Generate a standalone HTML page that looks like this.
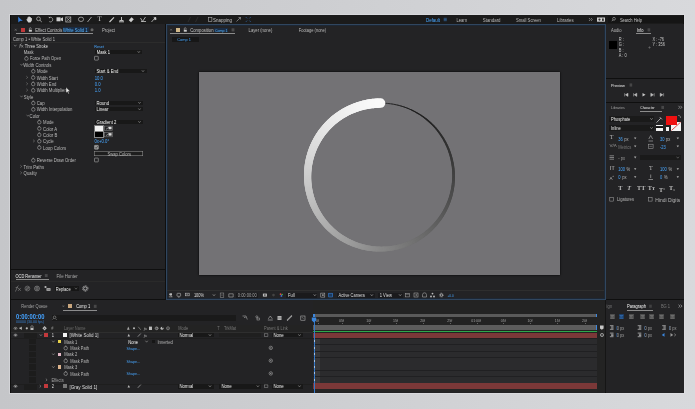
<!DOCTYPE html><html><head><meta charset="utf-8"><style>html,body{margin:0;padding:0;width:695px;height:409px;overflow:hidden;background:linear-gradient(90deg,#c5c6c9,#cdced1 45%,#d8d9dc);font-family:"Liberation Sans",sans-serif;}
.a{position:absolute;}
.t{position:absolute;transform-origin:0 0;font-size:4.1px;line-height:6px;color:#9a9a9a;white-space:nowrap;text-rendering:geometricPrecision;}
</style></head><body>
<div class="a" style="left:0;top:0;width:695px;height:409px;will-change:transform">
<div class="a" style="left:9px;top:14px;width:676px;height:380px;background:rgba(225,226,229,0.5);"></div>
<div class="a" style="left:10px;top:15px;width:674px;height:378px;background:#0f0f0f;"></div>
<div class="a" style="left:11px;top:15px;width:672px;height:9px;background:#1b1b1b;"></div>
<div class="a" style="left:11px;top:24px;width:154px;height:245px;background:#232325;"></div>
<div class="a" style="left:11px;top:270px;width:154px;height:29px;background:#232325;"></div>
<div class="a" style="left:166px;top:24px;width:438px;height:274px;background:#232325;border:1px solid #30465f;box-sizing:content-box;box-shadow:inset 0 0 0 0.7px #1d2a3a;"></div>
<div class="a" style="left:606px;top:24px;width:77.6px;height:54px;background:#232325;"></div>
<div class="a" style="left:606px;top:79px;width:77.6px;height:23px;background:#232325;"></div>
<div class="a" style="left:606px;top:103px;width:77.6px;height:196px;background:#232325;"></div>
<div class="a" style="left:11px;top:300px;width:594px;height:92.6px;background:#232325;"></div>
<div class="a" style="left:606px;top:300px;width:77.6px;height:92.6px;background:#232325;"></div>
<div class="t" style="left:97.5px;top:15.2px;font-size:7px;line-height:8px;color:#cfcfcf;font-family:'Liberation Serif'">T</div>
<div class="a" style="left:608px;top:16px;width:75px;height:7px;background:#151515;"></div>
<div class="a" style="left:20.8px;top:28px;width:4.2px;height:3.6px;background:#c0393b;"></div>
<div class="a" style="left:62.5px;top:27.4px;width:26px;height:5px;background:#1a2c44;"></div>
<div class="a" style="left:16px;top:32.5px;width:77px;height:0.8px;background:#8c8c8c;"></div>
<div class="a" style="left:11px;top:35.5px;width:154px;height:6px;background:#232325;"></div>
<div class="a" style="left:11px;top:41.5px;width:154px;height:0.6px;background:#2c2c2c;"></div>
<div class="a" style="left:94.8px;top:49.660000000000004px;width:47.5px;height:4.6px;background:#181818;"></div>
<div class="a" style="left:94.5px;top:68.74000000000001px;width:52px;height:4.6px;background:#181818;"></div>
<div class="a" style="left:94.5px;top:100.54px;width:48.5px;height:4.6px;background:#181818;"></div>
<div class="a" style="left:94.5px;top:106.9px;width:48.5px;height:4.6px;background:#181818;"></div>
<div class="a" style="left:94.5px;top:119.62000000000002px;width:48.5px;height:4.6px;background:#181818;"></div>
<div class="a" style="left:94.5px;top:125.98px;width:8.3px;height:4.6px;background:#f2f2f2;outline:0.5px solid #777;"></div>
<div class="a" style="left:94.5px;top:132.34px;width:8.3px;height:4.6px;background:#000;outline:0.5px solid #888;"></div>
<div class="a" style="left:94.4px;top:151.12px;width:48.6px;height:5.2px;background:#1e1e1e;box-shadow:inset 0 0 0 0.5px #9a9a9a;"></div>
<div class="a" style="left:15.5px;top:278.6px;width:33px;height:0.8px;background:#8c8c8c;"></div>
<div class="a" style="left:11px;top:280.5px;width:154px;height:0.5px;background:#2a2a2a;"></div>
<div class="a" style="left:54.5px;top:286px;width:24.5px;height:5px;background:#161616;"></div>
<div class="a" style="left:176.2px;top:28.1px;width:3.7px;height:3.5px;background:#d2b98a;"></div>
<div class="a" style="left:213.8px;top:27.5px;width:14px;height:4.8px;background:#1a2c44;"></div>
<div class="a" style="left:169.8px;top:33.1px;width:65px;height:0.8px;background:#8c8c8c;"></div>
<div class="a" style="left:172.3px;top:36.5px;width:26.7px;height:5px;background:#171717;"></div>
<div class="a" style="left:167px;top:290.2px;width:437px;height:0.5px;background:#2e2e2e;"></div>
<div class="a" style="left:236.3px;top:292.6px;width:22.2px;height:5px;background:#1a1a1c;"></div>
<div class="a" style="left:285.8px;top:292.6px;width:31.7px;height:5px;background:#1a1a1c;"></div>
<div class="a" style="left:336.5px;top:292.6px;width:38px;height:5px;background:#1a1a1c;"></div>
<div class="a" style="left:377.8px;top:292.6px;width:25px;height:5px;background:#1a1a1c;"></div>
<div class="a" style="left:328.4px;top:292.8px;width:4.4px;height:4.6px;background:#1d3a5e;"></div>
<div class="a" style="left:636.4px;top:32.8px;width:14.6px;height:0.8px;background:#8a8a8a;"></div>
<div class="a" style="left:609.2px;top:41.3px;width:8px;height:8px;background:#000;"></div>
<div class="a" style="left:640px;top:111.3px;width:22px;height:0.8px;background:#8c8c8c;"></div>
<div class="a" style="left:608.8px;top:116px;width:45.5px;height:6px;background:#1a1a1a;"></div>
<div class="a" style="left:608.8px;top:125.2px;width:45.5px;height:5.6px;background:#1a1a1a;"></div>
<div class="a" style="left:655.7px;top:124.9px;width:7.8px;height:1.6px;background:#f0f0f0;"></div>
<div class="a" style="left:655.7px;top:126.5px;width:7.8px;height:1.8px;background:#101010;"></div>
<div class="a" style="left:655.7px;top:128.3px;width:7.8px;height:2.4px;background:#f0f0f0;"></div>
<div class="a" style="left:671px;top:121.7px;width:10px;height:9px;background:#f4f4f4;"></div>
<div class="a" style="left:666px;top:115.5px;width:11px;height:9.8px;background:#f01010;"></div>
<div class="a" style="left:666px;top:126.8px;width:3.3px;height:3.9px;background:#f4f4f4;"></div>
<div class="t" style="left:609.8px;top:134.8px;font-size:6px;line-height:7px;color:#bbb;font-family:'Liberation Serif'">T</div>
<div class="t" style="left:609.5px;top:143.4px;font-size:4.5px;color:#999">V/A</div>
<div class="a" style="left:640px;top:155.2px;width:41px;height:4.6px;background:#1a1a1a;"></div>
<div class="t" style="left:609.6px;top:165.5px;font-size:6px;line-height:7px;color:#bbb;">IT</div>
<div class="t" style="left:649px;top:165.5px;font-size:6px;line-height:7px;color:#bbb;font-family:'Liberation Serif'">T</div>
<div class="t" style="left:609.5px;top:174.2px;font-size:4.5px;color:#bbb">A<sup style="font-size:2.5px">a</sup></div>
<div class="t" style="left:618.3px;top:185.9px;font-size:6.2px;color:#c0c0c0;font-family:'Liberation Serif';font-weight:bold">T</div>
<div class="t" style="left:627.3px;top:185.9px;font-size:6.2px;color:#c0c0c0;font-family:'Liberation Serif';font-weight:bold"><i>T</i></div>
<div class="t" style="left:637px;top:185.9px;font-size:6.2px;color:#c0c0c0;font-family:'Liberation Serif';font-weight:bold">TT</div>
<div class="t" style="left:647.8px;top:185.9px;font-size:6.2px;color:#c0c0c0;font-family:'Liberation Serif';font-weight:bold">Tт</div>
<div class="t" style="left:659px;top:185.9px;font-size:6.2px;color:#c0c0c0;font-family:'Liberation Serif';font-weight:bold">T<sup style="font-size:3px;vertical-align:2px">1</sup></div>
<div class="t" style="left:669px;top:185.9px;font-size:6.2px;color:#c0c0c0;font-family:'Liberation Serif';font-weight:bold">T<sub style="font-size:3px;vertical-align:-1px">1</sub></div>
<div class="a" style="left:68px;top:304.3px;width:3.9px;height:3.6px;background:#c9a67e;"></div>
<div class="a" style="left:62.7px;top:309.9px;width:34.5px;height:0.8px;background:#8c8c8c;"></div>
<div class="a" style="left:51.5px;top:314.6px;width:184px;height:6.4px;background:#1a1a1a;"></div>
<div class="a" style="left:11px;top:325px;width:302px;height:6.6px;background:#232323;"></div>
<div class="a" style="left:11px;top:331.6px;width:302px;height:0.5px;background:#2e2e2e;"></div>
<div class="a" style="left:11px;top:338.2px;width:302px;height:0.4px;background:#1e1e1e;"></div>
<div class="a" style="left:11px;top:383.7px;width:302px;height:0.4px;background:#1e1e1e;"></div>
<div class="a" style="left:28.5px;top:338.89px;width:7px;height:5.4px;background:#1c1c1c;"></div>
<div class="a" style="left:28.5px;top:345.28px;width:7px;height:5.4px;background:#1c1c1c;"></div>
<div class="a" style="left:28.5px;top:351.67px;width:7px;height:5.4px;background:#1c1c1c;"></div>
<div class="a" style="left:28.5px;top:358.06px;width:7px;height:5.4px;background:#1c1c1c;"></div>
<div class="a" style="left:28.5px;top:364.45px;width:7px;height:5.4px;background:#1c1c1c;"></div>
<div class="a" style="left:28.5px;top:370.84px;width:7px;height:5.4px;background:#1c1c1c;"></div>
<div class="a" style="left:28.5px;top:377.23px;width:7px;height:5.4px;background:#1c1c1c;"></div>
<div class="a" style="left:23.8px;top:332.6px;width:13.5px;height:5.2px;background:#1d1d1d;"></div>
<div class="a" style="left:23.8px;top:384.4px;width:13.5px;height:5.2px;background:#1d1d1d;"></div>
<div class="a" style="left:43.9px;top:333.1px;width:3.8px;height:3.9px;background:#c2393c;"></div>
<div class="a" style="left:63.2px;top:333.1px;width:4px;height:3.9px;background:#f4f4f4;"></div>
<div class="a" style="left:177.5px;top:332.8px;width:36px;height:4.6px;background:#181818;"></div>
<div class="a" style="left:219.4px;top:332.8px;width:42px;height:4.6px;background:#1f1f1f;"></div>
<div class="a" style="left:271.5px;top:332.8px;width:31.5px;height:4.6px;background:#181818;"></div>
<div class="a" style="left:58.1px;top:339.89px;width:3.3px;height:3.3px;background:#e8d24a;"></div>
<div class="a" style="left:58.1px;top:352.67px;width:3.3px;height:3.3px;background:#e6b9c8;"></div>
<div class="a" style="left:58.1px;top:365.45px;width:3.3px;height:3.3px;background:#dcb48e;"></div>
<div class="a" style="left:151.8px;top:339.69px;width:3.6px;height:3.6px;background:#161616;"></div>
<div class="a" style="left:43.9px;top:384.22px;width:3.8px;height:3.9px;background:#c2393c;"></div>
<div class="a" style="left:63.2px;top:384.22px;width:4px;height:3.9px;background:#777;"></div>
<div class="a" style="left:177.5px;top:383.92px;width:36px;height:4.6px;background:#181818;"></div>
<div class="a" style="left:219.4px;top:383.92px;width:42px;height:4.6px;background:#181818;"></div>
<div class="a" style="left:271.5px;top:383.92px;width:31.5px;height:4.6px;background:#181818;"></div>
<div class="a" style="left:313px;top:300px;width:292px;height:92px;background:#232323;"></div>
<div class="a" style="left:313px;top:313.6px;width:284px;height:3px;background:#5a5a5a;"></div>
<div class="a" style="left:313px;top:313.6px;width:1.6px;height:3px;background:#3b86dd;"></div>
<div class="a" style="left:595.6px;top:313.6px;width:1.6px;height:3px;background:#3b86dd;"></div>
<div class="a" style="left:313px;top:317px;width:284px;height:7.5px;background:#232323;"></div>
<div class="a" style="left:317.5px;top:322.7px;width:0.5px;height:1.5px;background:#666;"></div>
<div class="a" style="left:341.6px;top:322.7px;width:0.5px;height:1.5px;background:#666;"></div>
<div class="a" style="left:368.8px;top:322.7px;width:0.5px;height:1.5px;background:#666;"></div>
<div class="a" style="left:395.6px;top:322.7px;width:0.5px;height:1.5px;background:#666;"></div>
<div class="a" style="left:422.7px;top:322.7px;width:0.5px;height:1.5px;background:#666;"></div>
<div class="a" style="left:449.8px;top:322.7px;width:0.5px;height:1.5px;background:#666;"></div>
<div class="a" style="left:476.6px;top:322.7px;width:0.5px;height:1.5px;background:#666;"></div>
<div class="a" style="left:503.4px;top:322.7px;width:0.5px;height:1.5px;background:#666;"></div>
<div class="a" style="left:530px;top:322.7px;width:0.5px;height:1.5px;background:#666;"></div>
<div class="a" style="left:557.4px;top:322.7px;width:0.5px;height:1.5px;background:#666;"></div>
<div class="a" style="left:584.5px;top:322.7px;width:0.5px;height:1.5px;background:#666;"></div>
<div class="a" style="left:313px;top:325px;width:284px;height:4.6px;background:#5d5d5d;"></div>
<div class="a" style="left:595.6px;top:325px;width:1.8px;height:5px;background:#3b86dd;"></div>
<div class="a" style="left:313px;top:330.5px;width:284px;height:1.1px;background:#2ea84a;"></div>
<div class="a" style="left:313px;top:332.5px;width:284px;height:5.6px;background:#7b3838;"></div>
<div class="a" style="left:313px;top:338.2px;width:284px;height:45px;background:#202022;"></div>
<div class="a" style="left:313px;top:338.79px;width:284px;height:5.6px;background:#2b2b2d;"></div>
<div class="a" style="left:314px;top:338.79px;width:6px;height:5.6px;background:#38383a;"></div>
<div class="a" style="left:313px;top:345.18px;width:284px;height:5.6px;background:#2b2b2d;"></div>
<div class="a" style="left:314px;top:345.18px;width:6px;height:5.6px;background:#38383a;"></div>
<div class="a" style="left:313px;top:351.57000000000005px;width:284px;height:5.6px;background:#2b2b2d;"></div>
<div class="a" style="left:314px;top:351.57000000000005px;width:6px;height:5.6px;background:#38383a;"></div>
<div class="a" style="left:313px;top:357.96000000000004px;width:284px;height:5.6px;background:#2b2b2d;"></div>
<div class="a" style="left:314px;top:357.96000000000004px;width:6px;height:5.6px;background:#38383a;"></div>
<div class="a" style="left:313px;top:364.35px;width:284px;height:5.6px;background:#2b2b2d;"></div>
<div class="a" style="left:314px;top:364.35px;width:6px;height:5.6px;background:#38383a;"></div>
<div class="a" style="left:313px;top:370.74px;width:284px;height:5.6px;background:#2b2b2d;"></div>
<div class="a" style="left:314px;top:370.74px;width:6px;height:5.6px;background:#38383a;"></div>
<div class="a" style="left:313px;top:377.13000000000005px;width:284px;height:5.6px;background:#2b2b2d;"></div>
<div class="a" style="left:314px;top:377.13000000000005px;width:6px;height:5.6px;background:#38383a;"></div>
<div class="a" style="left:313px;top:383.2px;width:284px;height:5.6px;background:#7b3838;"></div>
<div class="a" style="left:313px;top:388.8px;width:284px;height:3.2px;background:#252525;"></div>
<div class="a" style="left:313.6px;top:317.5px;width:0.9px;height:75px;background:#3578c8;"></div>
<div class="a" style="left:313.5px;top:340.49px;width:1.1px;height:2.0px;background:#9fbfe6;"></div>
<div class="a" style="left:313.5px;top:346.88px;width:1.1px;height:2.0px;background:#9fbfe6;"></div>
<div class="a" style="left:313.5px;top:353.27000000000004px;width:1.1px;height:2.0px;background:#9fbfe6;"></div>
<div class="a" style="left:313.5px;top:359.66px;width:1.1px;height:2.0px;background:#9fbfe6;"></div>
<div class="a" style="left:313.5px;top:366.05px;width:1.1px;height:2.0px;background:#9fbfe6;"></div>
<div class="a" style="left:313.5px;top:372.44px;width:1.1px;height:2.0px;background:#9fbfe6;"></div>
<div class="a" style="left:313.5px;top:378.83000000000004px;width:1.1px;height:2.0px;background:#9fbfe6;"></div>
<div class="a" style="left:605px;top:300px;width:1px;height:92px;background:#151515;"></div>
<div class="a" style="left:627px;top:310.2px;width:26px;height:0.8px;background:#8c8c8c;"></div>
<div class="a" style="left:609.6999999999999px;top:314.3px;width:5.2px;height:5px;background:#4a4a4a;"></div>
<div class="a" style="left:618.8px;top:314.3px;width:5.2px;height:5px;background:#1d3a5e;"></div>
<div class="a" style="left:628.5px;top:314.3px;width:5.2px;height:5px;background:#4a4a4a;"></div>
<div class="a" style="left:640.1px;top:314.3px;width:5.2px;height:5px;background:#4a4a4a;"></div>
<div class="a" style="left:649.1999999999999px;top:314.3px;width:5.2px;height:5px;background:#4a4a4a;"></div>
<div class="a" style="left:658.9px;top:314.3px;width:5.2px;height:5px;background:#4a4a4a;"></div>
<div class="a" style="left:669.9px;top:314.3px;width:5.2px;height:5px;background:#4a4a4a;"></div>
<div class="a" style="left:616.3000000000001px;top:325.5px;width:1.2px;height:4px;background:#1d3a5e;"></div>
<div class="a" style="left:644.1px;top:325.5px;width:1.2px;height:4px;background:#1d3a5e;"></div>
<div class="a" style="left:668.6px;top:325.5px;width:1.2px;height:4px;background:#1d3a5e;"></div>
<div class="a" style="left:616.3000000000001px;top:332.9px;width:1.2px;height:4px;background:#1d3a5e;"></div>
<div class="a" style="left:644.1px;top:332.9px;width:1.2px;height:4px;background:#1d3a5e;"></div>
</div>
<div class="a" style="left:199px;top:72px;width:361px;height:203px;background:#737275;box-shadow:0 0 2px #000;"></div>
<svg class="a" style="left:0;top:0" width="695" height="409" viewBox="0 0 695 409"><g stroke-linecap="round" fill="none"><line x1="382.13" y1="103.12" x2="380.60" y2="103.10" stroke="rgb(18,18,18)" stroke-width="0.42"/>
<line x1="383.66" y1="103.16" x2="382.13" y2="103.12" stroke="rgb(19,19,19)" stroke-width="0.45"/>
<line x1="385.18" y1="103.24" x2="383.66" y2="103.16" stroke="rgb(19,19,19)" stroke-width="0.48"/>
<line x1="386.71" y1="103.36" x2="385.18" y2="103.24" stroke="rgb(19,19,19)" stroke-width="0.51"/>
<line x1="388.23" y1="103.50" x2="386.71" y2="103.36" stroke="rgb(20,20,20)" stroke-width="0.54"/>
<line x1="389.75" y1="103.68" x2="388.23" y2="103.50" stroke="rgb(20,20,20)" stroke-width="0.57"/>
<line x1="391.26" y1="103.88" x2="389.75" y2="103.68" stroke="rgb(21,21,21)" stroke-width="0.60"/>
<line x1="392.77" y1="104.12" x2="391.26" y2="103.88" stroke="rgb(21,21,21)" stroke-width="0.63"/>
<line x1="394.28" y1="104.39" x2="392.77" y2="104.12" stroke="rgb(22,22,22)" stroke-width="0.66"/>
<line x1="395.78" y1="104.70" x2="394.28" y2="104.39" stroke="rgb(22,22,22)" stroke-width="0.69"/>
<line x1="397.27" y1="105.03" x2="395.78" y2="104.70" stroke="rgb(22,22,22)" stroke-width="0.72"/>
<line x1="398.75" y1="105.39" x2="397.27" y2="105.03" stroke="rgb(23,23,23)" stroke-width="0.75"/>
<line x1="400.23" y1="105.79" x2="398.75" y2="105.39" stroke="rgb(23,23,23)" stroke-width="0.78"/>
<line x1="401.70" y1="106.22" x2="400.23" y2="105.79" stroke="rgb(24,24,24)" stroke-width="0.81"/>
<line x1="403.16" y1="106.67" x2="401.70" y2="106.22" stroke="rgb(24,24,24)" stroke-width="0.84"/>
<line x1="404.61" y1="107.16" x2="403.16" y2="106.67" stroke="rgb(25,25,25)" stroke-width="0.87"/>
<line x1="406.05" y1="107.68" x2="404.61" y2="107.16" stroke="rgb(25,25,25)" stroke-width="0.90"/>
<line x1="407.47" y1="108.23" x2="406.05" y2="107.68" stroke="rgb(26,26,26)" stroke-width="0.93"/>
<line x1="408.89" y1="108.80" x2="407.47" y2="108.23" stroke="rgb(26,26,26)" stroke-width="0.96"/>
<line x1="410.29" y1="109.41" x2="408.89" y2="108.80" stroke="rgb(27,27,27)" stroke-width="0.99"/>
<line x1="411.68" y1="110.05" x2="410.29" y2="109.41" stroke="rgb(27,27,27)" stroke-width="1.02"/>
<line x1="413.06" y1="110.71" x2="411.68" y2="110.05" stroke="rgb(28,28,28)" stroke-width="1.05"/>
<line x1="414.42" y1="111.41" x2="413.06" y2="110.71" stroke="rgb(29,29,29)" stroke-width="1.08"/>
<line x1="415.77" y1="112.13" x2="414.42" y2="111.41" stroke="rgb(29,29,29)" stroke-width="1.11"/>
<line x1="417.10" y1="112.88" x2="415.77" y2="112.13" stroke="rgb(30,30,30)" stroke-width="1.14"/>
<line x1="418.42" y1="113.66" x2="417.10" y2="112.88" stroke="rgb(30,30,30)" stroke-width="1.17"/>
<line x1="419.72" y1="114.46" x2="418.42" y2="113.66" stroke="rgb(31,31,31)" stroke-width="1.20"/>
<line x1="421.00" y1="115.30" x2="419.72" y2="114.46" stroke="rgb(31,31,31)" stroke-width="1.23"/>
<line x1="422.26" y1="116.16" x2="421.00" y2="115.30" stroke="rgb(32,32,32)" stroke-width="1.26"/>
<line x1="423.51" y1="117.04" x2="422.26" y2="116.16" stroke="rgb(33,33,33)" stroke-width="1.29"/>
<line x1="424.74" y1="117.95" x2="423.51" y2="117.04" stroke="rgb(33,33,33)" stroke-width="1.33"/>
<line x1="425.94" y1="118.89" x2="424.74" y2="117.95" stroke="rgb(34,34,34)" stroke-width="1.36"/>
<line x1="427.13" y1="119.85" x2="425.94" y2="118.89" stroke="rgb(34,34,34)" stroke-width="1.39"/>
<line x1="428.30" y1="120.84" x2="427.13" y2="119.85" stroke="rgb(35,35,35)" stroke-width="1.42"/>
<line x1="429.45" y1="121.85" x2="428.30" y2="120.84" stroke="rgb(36,36,36)" stroke-width="1.45"/>
<line x1="430.57" y1="122.89" x2="429.45" y2="121.85" stroke="rgb(36,36,36)" stroke-width="1.48"/>
<line x1="431.68" y1="123.94" x2="430.57" y2="122.89" stroke="rgb(37,37,37)" stroke-width="1.51"/>
<line x1="432.76" y1="125.02" x2="431.68" y2="123.94" stroke="rgb(37,37,37)" stroke-width="1.54"/>
<line x1="433.81" y1="126.13" x2="432.76" y2="125.02" stroke="rgb(38,38,38)" stroke-width="1.57"/>
<line x1="434.85" y1="127.25" x2="433.81" y2="126.13" stroke="rgb(39,39,39)" stroke-width="1.60"/>
<line x1="435.86" y1="128.40" x2="434.85" y2="127.25" stroke="rgb(39,39,39)" stroke-width="1.63"/>
<line x1="436.85" y1="129.57" x2="435.86" y2="128.40" stroke="rgb(40,40,40)" stroke-width="1.66"/>
<line x1="437.81" y1="130.76" x2="436.85" y2="129.57" stroke="rgb(41,41,41)" stroke-width="1.69"/>
<line x1="438.75" y1="131.96" x2="437.81" y2="130.76" stroke="rgb(41,41,41)" stroke-width="1.72"/>
<line x1="439.66" y1="133.19" x2="438.75" y2="131.96" stroke="rgb(42,42,42)" stroke-width="1.75"/>
<line x1="440.54" y1="134.44" x2="439.66" y2="133.19" stroke="rgb(43,43,43)" stroke-width="1.78"/>
<line x1="441.40" y1="135.70" x2="440.54" y2="134.44" stroke="rgb(43,43,43)" stroke-width="1.81"/>
<line x1="442.24" y1="136.98" x2="441.40" y2="135.70" stroke="rgb(44,44,44)" stroke-width="1.84"/>
<line x1="443.04" y1="138.28" x2="442.24" y2="136.98" stroke="rgb(45,45,45)" stroke-width="1.87"/>
<line x1="443.82" y1="139.60" x2="443.04" y2="138.28" stroke="rgb(46,46,46)" stroke-width="1.90"/>
<line x1="444.57" y1="140.93" x2="443.82" y2="139.60" stroke="rgb(46,46,46)" stroke-width="1.93"/>
<line x1="445.29" y1="142.28" x2="444.57" y2="140.93" stroke="rgb(47,47,47)" stroke-width="1.96"/>
<line x1="445.99" y1="143.64" x2="445.29" y2="142.28" stroke="rgb(48,48,48)" stroke-width="1.99"/>
<line x1="446.65" y1="145.02" x2="445.99" y2="143.64" stroke="rgb(48,48,48)" stroke-width="2.02"/>
<line x1="447.29" y1="146.41" x2="446.65" y2="145.02" stroke="rgb(49,49,49)" stroke-width="2.05"/>
<line x1="447.90" y1="147.81" x2="447.29" y2="146.41" stroke="rgb(50,50,50)" stroke-width="2.08"/>
<line x1="448.47" y1="149.23" x2="447.90" y2="147.81" stroke="rgb(51,51,51)" stroke-width="2.11"/>
<line x1="449.02" y1="150.65" x2="448.47" y2="149.23" stroke="rgb(51,51,51)" stroke-width="2.14"/>
<line x1="449.54" y1="152.09" x2="449.02" y2="150.65" stroke="rgb(52,52,52)" stroke-width="2.17"/>
<line x1="450.03" y1="153.54" x2="449.54" y2="152.09" stroke="rgb(53,53,53)" stroke-width="2.20"/>
<line x1="450.48" y1="155.00" x2="450.03" y2="153.54" stroke="rgb(54,54,54)" stroke-width="2.24"/>
<line x1="450.91" y1="156.47" x2="450.48" y2="155.00" stroke="rgb(54,54,54)" stroke-width="2.27"/>
<line x1="451.31" y1="157.95" x2="450.91" y2="156.47" stroke="rgb(55,55,55)" stroke-width="2.30"/>
<line x1="451.67" y1="159.43" x2="451.31" y2="157.95" stroke="rgb(56,56,56)" stroke-width="2.33"/>
<line x1="452.00" y1="160.92" x2="451.67" y2="159.43" stroke="rgb(57,57,57)" stroke-width="2.36"/>
<line x1="452.31" y1="162.42" x2="452.00" y2="160.92" stroke="rgb(58,58,58)" stroke-width="2.39"/>
<line x1="452.58" y1="163.93" x2="452.31" y2="162.42" stroke="rgb(58,58,58)" stroke-width="2.42"/>
<line x1="452.82" y1="165.44" x2="452.58" y2="163.93" stroke="rgb(59,59,59)" stroke-width="2.45"/>
<line x1="453.02" y1="166.95" x2="452.82" y2="165.44" stroke="rgb(60,60,60)" stroke-width="2.48"/>
<line x1="453.20" y1="168.47" x2="453.02" y2="166.95" stroke="rgb(61,61,61)" stroke-width="2.51"/>
<line x1="453.34" y1="169.99" x2="453.20" y2="168.47" stroke="rgb(61,61,61)" stroke-width="2.54"/>
<line x1="453.46" y1="171.52" x2="453.34" y2="169.99" stroke="rgb(62,62,62)" stroke-width="2.57"/>
<line x1="453.54" y1="173.04" x2="453.46" y2="171.52" stroke="rgb(63,63,63)" stroke-width="2.60"/>
<line x1="453.58" y1="174.57" x2="453.54" y2="173.04" stroke="rgb(64,64,64)" stroke-width="2.63"/>
<line x1="453.60" y1="176.10" x2="453.58" y2="174.57" stroke="rgb(65,65,65)" stroke-width="2.66"/>
<line x1="453.58" y1="177.63" x2="453.60" y2="176.10" stroke="rgb(66,66,66)" stroke-width="2.69"/>
<line x1="453.54" y1="179.16" x2="453.58" y2="177.63" stroke="rgb(66,66,66)" stroke-width="2.72"/>
<line x1="453.46" y1="180.68" x2="453.54" y2="179.16" stroke="rgb(67,67,67)" stroke-width="2.75"/>
<line x1="453.34" y1="182.21" x2="453.46" y2="180.68" stroke="rgb(68,68,68)" stroke-width="2.78"/>
<line x1="453.20" y1="183.73" x2="453.34" y2="182.21" stroke="rgb(69,69,69)" stroke-width="2.81"/>
<line x1="453.02" y1="185.25" x2="453.20" y2="183.73" stroke="rgb(70,70,70)" stroke-width="2.84"/>
<line x1="452.82" y1="186.76" x2="453.02" y2="185.25" stroke="rgb(71,71,71)" stroke-width="2.87"/>
<line x1="452.58" y1="188.27" x2="452.82" y2="186.76" stroke="rgb(71,71,71)" stroke-width="2.90"/>
<line x1="452.31" y1="189.78" x2="452.58" y2="188.27" stroke="rgb(72,72,72)" stroke-width="2.93"/>
<line x1="452.00" y1="191.28" x2="452.31" y2="189.78" stroke="rgb(73,73,73)" stroke-width="2.96"/>
<line x1="451.67" y1="192.77" x2="452.00" y2="191.28" stroke="rgb(74,74,74)" stroke-width="2.99"/>
<line x1="451.31" y1="194.25" x2="451.67" y2="192.77" stroke="rgb(75,75,75)" stroke-width="3.02"/>
<line x1="450.91" y1="195.73" x2="451.31" y2="194.25" stroke="rgb(76,76,76)" stroke-width="3.05"/>
<line x1="450.48" y1="197.20" x2="450.91" y2="195.73" stroke="rgb(77,77,77)" stroke-width="3.08"/>
<line x1="450.03" y1="198.66" x2="450.48" y2="197.20" stroke="rgb(77,77,77)" stroke-width="3.11"/>
<line x1="449.54" y1="200.11" x2="450.03" y2="198.66" stroke="rgb(78,78,78)" stroke-width="3.15"/>
<line x1="449.02" y1="201.55" x2="449.54" y2="200.11" stroke="rgb(79,79,79)" stroke-width="3.18"/>
<line x1="448.47" y1="202.97" x2="449.02" y2="201.55" stroke="rgb(80,80,80)" stroke-width="3.21"/>
<line x1="447.90" y1="204.39" x2="448.47" y2="202.97" stroke="rgb(81,81,81)" stroke-width="3.24"/>
<line x1="447.29" y1="205.79" x2="447.90" y2="204.39" stroke="rgb(82,82,82)" stroke-width="3.27"/>
<line x1="446.65" y1="207.18" x2="447.29" y2="205.79" stroke="rgb(83,83,83)" stroke-width="3.30"/>
<line x1="445.99" y1="208.56" x2="446.65" y2="207.18" stroke="rgb(84,84,84)" stroke-width="3.33"/>
<line x1="445.29" y1="209.92" x2="445.99" y2="208.56" stroke="rgb(84,84,84)" stroke-width="3.36"/>
<line x1="444.57" y1="211.27" x2="445.29" y2="209.92" stroke="rgb(85,85,85)" stroke-width="3.39"/>
<line x1="443.82" y1="212.60" x2="444.57" y2="211.27" stroke="rgb(86,86,86)" stroke-width="3.42"/>
<line x1="443.04" y1="213.92" x2="443.82" y2="212.60" stroke="rgb(87,87,87)" stroke-width="3.45"/>
<line x1="442.24" y1="215.22" x2="443.04" y2="213.92" stroke="rgb(88,88,88)" stroke-width="3.48"/>
<line x1="441.40" y1="216.50" x2="442.24" y2="215.22" stroke="rgb(89,89,89)" stroke-width="3.51"/>
<line x1="440.54" y1="217.76" x2="441.40" y2="216.50" stroke="rgb(90,90,90)" stroke-width="3.54"/>
<line x1="439.66" y1="219.01" x2="440.54" y2="217.76" stroke="rgb(91,91,91)" stroke-width="3.57"/>
<line x1="438.75" y1="220.24" x2="439.66" y2="219.01" stroke="rgb(92,92,92)" stroke-width="3.60"/>
<line x1="437.81" y1="221.44" x2="438.75" y2="220.24" stroke="rgb(93,93,93)" stroke-width="3.63"/>
<line x1="436.85" y1="222.63" x2="437.81" y2="221.44" stroke="rgb(94,94,94)" stroke-width="3.66"/>
<line x1="435.86" y1="223.80" x2="436.85" y2="222.63" stroke="rgb(94,94,94)" stroke-width="3.69"/>
<line x1="434.85" y1="224.95" x2="435.86" y2="223.80" stroke="rgb(95,95,95)" stroke-width="3.72"/>
<line x1="433.81" y1="226.07" x2="434.85" y2="224.95" stroke="rgb(96,96,96)" stroke-width="3.75"/>
<line x1="432.76" y1="227.18" x2="433.81" y2="226.07" stroke="rgb(97,97,97)" stroke-width="3.78"/>
<line x1="431.68" y1="228.26" x2="432.76" y2="227.18" stroke="rgb(98,98,98)" stroke-width="3.81"/>
<line x1="430.57" y1="229.31" x2="431.68" y2="228.26" stroke="rgb(99,99,99)" stroke-width="3.84"/>
<line x1="429.45" y1="230.35" x2="430.57" y2="229.31" stroke="rgb(100,100,100)" stroke-width="3.87"/>
<line x1="428.30" y1="231.36" x2="429.45" y2="230.35" stroke="rgb(101,101,101)" stroke-width="3.90"/>
<line x1="427.13" y1="232.35" x2="428.30" y2="231.36" stroke="rgb(102,102,102)" stroke-width="3.93"/>
<line x1="425.94" y1="233.31" x2="427.13" y2="232.35" stroke="rgb(103,103,103)" stroke-width="3.96"/>
<line x1="424.74" y1="234.25" x2="425.94" y2="233.31" stroke="rgb(104,104,104)" stroke-width="3.99"/>
<line x1="423.51" y1="235.16" x2="424.74" y2="234.25" stroke="rgb(105,105,105)" stroke-width="4.02"/>
<line x1="422.26" y1="236.04" x2="423.51" y2="235.16" stroke="rgb(106,106,106)" stroke-width="4.06"/>
<line x1="421.00" y1="236.90" x2="422.26" y2="236.04" stroke="rgb(107,107,107)" stroke-width="4.09"/>
<line x1="419.72" y1="237.74" x2="421.00" y2="236.90" stroke="rgb(108,108,108)" stroke-width="4.12"/>
<line x1="418.42" y1="238.54" x2="419.72" y2="237.74" stroke="rgb(109,109,109)" stroke-width="4.15"/>
<line x1="417.10" y1="239.32" x2="418.42" y2="238.54" stroke="rgb(109,109,109)" stroke-width="4.18"/>
<line x1="415.77" y1="240.07" x2="417.10" y2="239.32" stroke="rgb(110,110,110)" stroke-width="4.21"/>
<line x1="414.42" y1="240.79" x2="415.77" y2="240.07" stroke="rgb(111,111,111)" stroke-width="4.24"/>
<line x1="413.06" y1="241.49" x2="414.42" y2="240.79" stroke="rgb(112,112,112)" stroke-width="4.27"/>
<line x1="411.68" y1="242.15" x2="413.06" y2="241.49" stroke="rgb(113,113,113)" stroke-width="4.30"/>
<line x1="410.29" y1="242.79" x2="411.68" y2="242.15" stroke="rgb(114,114,114)" stroke-width="4.33"/>
<line x1="408.89" y1="243.40" x2="410.29" y2="242.79" stroke="rgb(115,115,115)" stroke-width="4.36"/>
<line x1="407.47" y1="243.97" x2="408.89" y2="243.40" stroke="rgb(116,116,116)" stroke-width="4.39"/>
<line x1="406.05" y1="244.52" x2="407.47" y2="243.97" stroke="rgb(117,117,117)" stroke-width="4.42"/>
<line x1="404.61" y1="245.04" x2="406.05" y2="244.52" stroke="rgb(118,118,118)" stroke-width="4.45"/>
<line x1="403.16" y1="245.53" x2="404.61" y2="245.04" stroke="rgb(119,119,119)" stroke-width="4.48"/>
<line x1="401.70" y1="245.98" x2="403.16" y2="245.53" stroke="rgb(120,120,120)" stroke-width="4.51"/>
<line x1="400.23" y1="246.41" x2="401.70" y2="245.98" stroke="rgb(121,121,121)" stroke-width="4.54"/>
<line x1="398.75" y1="246.81" x2="400.23" y2="246.41" stroke="rgb(122,122,122)" stroke-width="4.57"/>
<line x1="397.27" y1="247.17" x2="398.75" y2="246.81" stroke="rgb(123,123,123)" stroke-width="4.60"/>
<line x1="395.78" y1="247.50" x2="397.27" y2="247.17" stroke="rgb(124,124,124)" stroke-width="4.63"/>
<line x1="394.28" y1="247.81" x2="395.78" y2="247.50" stroke="rgb(125,125,125)" stroke-width="4.66"/>
<line x1="392.77" y1="248.08" x2="394.28" y2="247.81" stroke="rgb(126,126,126)" stroke-width="4.69"/>
<line x1="391.26" y1="248.32" x2="392.77" y2="248.08" stroke="rgb(127,127,127)" stroke-width="4.72"/>
<line x1="389.75" y1="248.52" x2="391.26" y2="248.32" stroke="rgb(128,128,128)" stroke-width="4.75"/>
<line x1="388.23" y1="248.70" x2="389.75" y2="248.52" stroke="rgb(129,129,129)" stroke-width="4.78"/>
<line x1="386.71" y1="248.84" x2="388.23" y2="248.70" stroke="rgb(130,130,130)" stroke-width="4.81"/>
<line x1="385.18" y1="248.96" x2="386.71" y2="248.84" stroke="rgb(131,131,131)" stroke-width="4.84"/>
<line x1="383.66" y1="249.04" x2="385.18" y2="248.96" stroke="rgb(132,132,132)" stroke-width="4.87"/>
<line x1="382.13" y1="249.08" x2="383.66" y2="249.04" stroke="rgb(133,133,133)" stroke-width="4.90"/>
<line x1="380.60" y1="249.10" x2="382.13" y2="249.08" stroke="rgb(134,134,134)" stroke-width="4.93"/>
<line x1="379.07" y1="249.08" x2="380.60" y2="249.10" stroke="rgb(134,134,134)" stroke-width="4.97"/>
<line x1="377.54" y1="249.04" x2="379.07" y2="249.08" stroke="rgb(135,135,135)" stroke-width="5.00"/>
<line x1="376.02" y1="248.96" x2="377.54" y2="249.04" stroke="rgb(136,136,136)" stroke-width="5.03"/>
<line x1="374.49" y1="248.84" x2="376.02" y2="248.96" stroke="rgb(137,137,137)" stroke-width="5.06"/>
<line x1="372.97" y1="248.70" x2="374.49" y2="248.84" stroke="rgb(138,138,138)" stroke-width="5.09"/>
<line x1="371.45" y1="248.52" x2="372.97" y2="248.70" stroke="rgb(139,139,139)" stroke-width="5.12"/>
<line x1="369.94" y1="248.32" x2="371.45" y2="248.52" stroke="rgb(140,140,140)" stroke-width="5.15"/>
<line x1="368.43" y1="248.08" x2="369.94" y2="248.32" stroke="rgb(141,141,141)" stroke-width="5.18"/>
<line x1="366.92" y1="247.81" x2="368.43" y2="248.08" stroke="rgb(142,142,142)" stroke-width="5.21"/>
<line x1="365.42" y1="247.50" x2="366.92" y2="247.81" stroke="rgb(143,143,143)" stroke-width="5.24"/>
<line x1="363.93" y1="247.17" x2="365.42" y2="247.50" stroke="rgb(144,144,144)" stroke-width="5.27"/>
<line x1="362.45" y1="246.81" x2="363.93" y2="247.17" stroke="rgb(145,145,145)" stroke-width="5.30"/>
<line x1="360.97" y1="246.41" x2="362.45" y2="246.81" stroke="rgb(146,146,146)" stroke-width="5.33"/>
<line x1="359.50" y1="245.98" x2="360.97" y2="246.41" stroke="rgb(147,147,147)" stroke-width="5.36"/>
<line x1="358.04" y1="245.53" x2="359.50" y2="245.98" stroke="rgb(148,148,148)" stroke-width="5.39"/>
<line x1="356.59" y1="245.04" x2="358.04" y2="245.53" stroke="rgb(149,149,149)" stroke-width="5.42"/>
<line x1="355.15" y1="244.52" x2="356.59" y2="245.04" stroke="rgb(150,150,150)" stroke-width="5.45"/>
<line x1="353.73" y1="243.97" x2="355.15" y2="244.52" stroke="rgb(151,151,151)" stroke-width="5.48"/>
<line x1="352.31" y1="243.40" x2="353.73" y2="243.97" stroke="rgb(152,152,152)" stroke-width="5.51"/>
<line x1="350.91" y1="242.79" x2="352.31" y2="243.40" stroke="rgb(153,153,153)" stroke-width="5.54"/>
<line x1="349.52" y1="242.15" x2="350.91" y2="242.79" stroke="rgb(154,154,154)" stroke-width="5.57"/>
<line x1="348.14" y1="241.49" x2="349.52" y2="242.15" stroke="rgb(155,155,155)" stroke-width="5.60"/>
<line x1="346.78" y1="240.79" x2="348.14" y2="241.49" stroke="rgb(156,156,156)" stroke-width="5.63"/>
<line x1="345.43" y1="240.07" x2="346.78" y2="240.79" stroke="rgb(157,157,157)" stroke-width="5.66"/>
<line x1="344.10" y1="239.32" x2="345.43" y2="240.07" stroke="rgb(158,158,158)" stroke-width="5.69"/>
<line x1="342.78" y1="238.54" x2="344.10" y2="239.32" stroke="rgb(159,159,159)" stroke-width="5.72"/>
<line x1="341.48" y1="237.74" x2="342.78" y2="238.54" stroke="rgb(159,159,159)" stroke-width="5.75"/>
<line x1="340.20" y1="236.90" x2="341.48" y2="237.74" stroke="rgb(160,160,160)" stroke-width="5.78"/>
<line x1="338.94" y1="236.04" x2="340.20" y2="236.90" stroke="rgb(161,161,161)" stroke-width="5.81"/>
<line x1="337.69" y1="235.16" x2="338.94" y2="236.04" stroke="rgb(162,162,162)" stroke-width="5.84"/>
<line x1="336.46" y1="234.25" x2="337.69" y2="235.16" stroke="rgb(163,163,163)" stroke-width="5.88"/>
<line x1="335.26" y1="233.31" x2="336.46" y2="234.25" stroke="rgb(164,164,164)" stroke-width="5.91"/>
<line x1="334.07" y1="232.35" x2="335.26" y2="233.31" stroke="rgb(165,165,165)" stroke-width="5.94"/>
<line x1="332.90" y1="231.36" x2="334.07" y2="232.35" stroke="rgb(166,166,166)" stroke-width="5.97"/>
<line x1="331.75" y1="230.35" x2="332.90" y2="231.36" stroke="rgb(167,167,167)" stroke-width="6.00"/>
<line x1="330.63" y1="229.31" x2="331.75" y2="230.35" stroke="rgb(168,168,168)" stroke-width="6.03"/>
<line x1="329.52" y1="228.26" x2="330.63" y2="229.31" stroke="rgb(169,169,169)" stroke-width="6.06"/>
<line x1="328.44" y1="227.18" x2="329.52" y2="228.26" stroke="rgb(170,170,170)" stroke-width="6.09"/>
<line x1="327.39" y1="226.07" x2="328.44" y2="227.18" stroke="rgb(171,171,171)" stroke-width="6.12"/>
<line x1="326.35" y1="224.95" x2="327.39" y2="226.07" stroke="rgb(172,172,172)" stroke-width="6.15"/>
<line x1="325.34" y1="223.80" x2="326.35" y2="224.95" stroke="rgb(173,173,173)" stroke-width="6.18"/>
<line x1="324.35" y1="222.63" x2="325.34" y2="223.80" stroke="rgb(174,174,174)" stroke-width="6.21"/>
<line x1="323.39" y1="221.44" x2="324.35" y2="222.63" stroke="rgb(174,174,174)" stroke-width="6.24"/>
<line x1="322.45" y1="220.24" x2="323.39" y2="221.44" stroke="rgb(175,175,175)" stroke-width="6.27"/>
<line x1="321.54" y1="219.01" x2="322.45" y2="220.24" stroke="rgb(176,176,176)" stroke-width="6.30"/>
<line x1="320.66" y1="217.76" x2="321.54" y2="219.01" stroke="rgb(177,177,177)" stroke-width="6.33"/>
<line x1="319.80" y1="216.50" x2="320.66" y2="217.76" stroke="rgb(178,178,178)" stroke-width="6.36"/>
<line x1="318.96" y1="215.22" x2="319.80" y2="216.50" stroke="rgb(179,179,179)" stroke-width="6.39"/>
<line x1="318.16" y1="213.92" x2="318.96" y2="215.22" stroke="rgb(180,180,180)" stroke-width="6.42"/>
<line x1="317.38" y1="212.60" x2="318.16" y2="213.92" stroke="rgb(181,181,181)" stroke-width="6.45"/>
<line x1="316.63" y1="211.27" x2="317.38" y2="212.60" stroke="rgb(182,182,182)" stroke-width="6.48"/>
<line x1="315.91" y1="209.92" x2="316.63" y2="211.27" stroke="rgb(183,183,183)" stroke-width="6.51"/>
<line x1="315.21" y1="208.56" x2="315.91" y2="209.92" stroke="rgb(184,184,184)" stroke-width="6.54"/>
<line x1="314.55" y1="207.18" x2="315.21" y2="208.56" stroke="rgb(184,184,184)" stroke-width="6.57"/>
<line x1="313.91" y1="205.79" x2="314.55" y2="207.18" stroke="rgb(185,185,185)" stroke-width="6.60"/>
<line x1="313.30" y1="204.39" x2="313.91" y2="205.79" stroke="rgb(186,186,186)" stroke-width="6.63"/>
<line x1="312.73" y1="202.97" x2="313.30" y2="204.39" stroke="rgb(187,187,187)" stroke-width="6.66"/>
<line x1="312.18" y1="201.55" x2="312.73" y2="202.97" stroke="rgb(188,188,188)" stroke-width="6.69"/>
<line x1="311.66" y1="200.11" x2="312.18" y2="201.55" stroke="rgb(189,189,189)" stroke-width="6.72"/>
<line x1="311.17" y1="198.66" x2="311.66" y2="200.11" stroke="rgb(190,190,190)" stroke-width="6.75"/>
<line x1="310.72" y1="197.20" x2="311.17" y2="198.66" stroke="rgb(191,191,191)" stroke-width="6.79"/>
<line x1="310.29" y1="195.73" x2="310.72" y2="197.20" stroke="rgb(191,191,191)" stroke-width="6.82"/>
<line x1="309.89" y1="194.25" x2="310.29" y2="195.73" stroke="rgb(192,192,192)" stroke-width="6.85"/>
<line x1="309.53" y1="192.77" x2="309.89" y2="194.25" stroke="rgb(193,193,193)" stroke-width="6.88"/>
<line x1="309.20" y1="191.28" x2="309.53" y2="192.77" stroke="rgb(194,194,194)" stroke-width="6.91"/>
<line x1="308.89" y1="189.78" x2="309.20" y2="191.28" stroke="rgb(195,195,195)" stroke-width="6.94"/>
<line x1="308.62" y1="188.27" x2="308.89" y2="189.78" stroke="rgb(196,196,196)" stroke-width="6.97"/>
<line x1="308.38" y1="186.76" x2="308.62" y2="188.27" stroke="rgb(197,197,197)" stroke-width="7.00"/>
<line x1="308.18" y1="185.25" x2="308.38" y2="186.76" stroke="rgb(197,197,197)" stroke-width="7.03"/>
<line x1="308.00" y1="183.73" x2="308.18" y2="185.25" stroke="rgb(198,198,198)" stroke-width="7.06"/>
<line x1="307.86" y1="182.21" x2="308.00" y2="183.73" stroke="rgb(199,199,199)" stroke-width="7.09"/>
<line x1="307.74" y1="180.68" x2="307.86" y2="182.21" stroke="rgb(200,200,200)" stroke-width="7.12"/>
<line x1="307.66" y1="179.16" x2="307.74" y2="180.68" stroke="rgb(201,201,201)" stroke-width="7.15"/>
<line x1="307.62" y1="177.63" x2="307.66" y2="179.16" stroke="rgb(202,202,202)" stroke-width="7.18"/>
<line x1="307.60" y1="176.10" x2="307.62" y2="177.63" stroke="rgb(202,202,202)" stroke-width="7.21"/>
<line x1="307.62" y1="174.57" x2="307.60" y2="176.10" stroke="rgb(203,203,203)" stroke-width="7.24"/>
<line x1="307.66" y1="173.04" x2="307.62" y2="174.57" stroke="rgb(204,204,204)" stroke-width="7.27"/>
<line x1="307.74" y1="171.52" x2="307.66" y2="173.04" stroke="rgb(205,205,205)" stroke-width="7.30"/>
<line x1="307.86" y1="169.99" x2="307.74" y2="171.52" stroke="rgb(206,206,206)" stroke-width="7.33"/>
<line x1="308.00" y1="168.47" x2="307.86" y2="169.99" stroke="rgb(207,207,207)" stroke-width="7.36"/>
<line x1="308.18" y1="166.95" x2="308.00" y2="168.47" stroke="rgb(207,207,207)" stroke-width="7.39"/>
<line x1="308.38" y1="165.44" x2="308.18" y2="166.95" stroke="rgb(208,208,208)" stroke-width="7.42"/>
<line x1="308.62" y1="163.93" x2="308.38" y2="165.44" stroke="rgb(209,209,209)" stroke-width="7.45"/>
<line x1="308.89" y1="162.42" x2="308.62" y2="163.93" stroke="rgb(210,210,210)" stroke-width="7.48"/>
<line x1="309.20" y1="160.92" x2="308.89" y2="162.42" stroke="rgb(210,210,210)" stroke-width="7.51"/>
<line x1="309.53" y1="159.43" x2="309.20" y2="160.92" stroke="rgb(211,211,211)" stroke-width="7.54"/>
<line x1="309.89" y1="157.95" x2="309.53" y2="159.43" stroke="rgb(212,212,212)" stroke-width="7.57"/>
<line x1="310.29" y1="156.47" x2="309.89" y2="157.95" stroke="rgb(213,213,213)" stroke-width="7.60"/>
<line x1="310.72" y1="155.00" x2="310.29" y2="156.47" stroke="rgb(214,214,214)" stroke-width="7.63"/>
<line x1="311.17" y1="153.54" x2="310.72" y2="155.00" stroke="rgb(214,214,214)" stroke-width="7.66"/>
<line x1="311.66" y1="152.09" x2="311.17" y2="153.54" stroke="rgb(215,215,215)" stroke-width="7.70"/>
<line x1="312.18" y1="150.65" x2="311.66" y2="152.09" stroke="rgb(216,216,216)" stroke-width="7.73"/>
<line x1="312.73" y1="149.23" x2="312.18" y2="150.65" stroke="rgb(217,217,217)" stroke-width="7.76"/>
<line x1="313.30" y1="147.81" x2="312.73" y2="149.23" stroke="rgb(217,217,217)" stroke-width="7.79"/>
<line x1="313.91" y1="146.41" x2="313.30" y2="147.81" stroke="rgb(218,218,218)" stroke-width="7.82"/>
<line x1="314.55" y1="145.02" x2="313.91" y2="146.41" stroke="rgb(219,219,219)" stroke-width="7.85"/>
<line x1="315.21" y1="143.64" x2="314.55" y2="145.02" stroke="rgb(220,220,220)" stroke-width="7.88"/>
<line x1="315.91" y1="142.28" x2="315.21" y2="143.64" stroke="rgb(220,220,220)" stroke-width="7.91"/>
<line x1="316.63" y1="140.93" x2="315.91" y2="142.28" stroke="rgb(221,221,221)" stroke-width="7.94"/>
<line x1="317.38" y1="139.60" x2="316.63" y2="140.93" stroke="rgb(222,222,222)" stroke-width="7.97"/>
<line x1="318.16" y1="138.28" x2="317.38" y2="139.60" stroke="rgb(222,222,222)" stroke-width="8.00"/>
<line x1="318.96" y1="136.98" x2="318.16" y2="138.28" stroke="rgb(223,223,223)" stroke-width="8.03"/>
<line x1="319.80" y1="135.70" x2="318.96" y2="136.98" stroke="rgb(224,224,224)" stroke-width="8.06"/>
<line x1="320.66" y1="134.44" x2="319.80" y2="135.70" stroke="rgb(225,225,225)" stroke-width="8.09"/>
<line x1="321.54" y1="133.19" x2="320.66" y2="134.44" stroke="rgb(225,225,225)" stroke-width="8.12"/>
<line x1="322.45" y1="131.96" x2="321.54" y2="133.19" stroke="rgb(226,226,226)" stroke-width="8.15"/>
<line x1="323.39" y1="130.76" x2="322.45" y2="131.96" stroke="rgb(227,227,227)" stroke-width="8.18"/>
<line x1="324.35" y1="129.57" x2="323.39" y2="130.76" stroke="rgb(227,227,227)" stroke-width="8.21"/>
<line x1="325.34" y1="128.40" x2="324.35" y2="129.57" stroke="rgb(228,228,228)" stroke-width="8.24"/>
<line x1="326.35" y1="127.25" x2="325.34" y2="128.40" stroke="rgb(229,229,229)" stroke-width="8.27"/>
<line x1="327.39" y1="126.13" x2="326.35" y2="127.25" stroke="rgb(229,229,229)" stroke-width="8.30"/>
<line x1="328.44" y1="125.02" x2="327.39" y2="126.13" stroke="rgb(230,230,230)" stroke-width="8.33"/>
<line x1="329.52" y1="123.94" x2="328.44" y2="125.02" stroke="rgb(231,231,231)" stroke-width="8.36"/>
<line x1="330.63" y1="122.89" x2="329.52" y2="123.94" stroke="rgb(231,231,231)" stroke-width="8.39"/>
<line x1="331.75" y1="121.85" x2="330.63" y2="122.89" stroke="rgb(232,232,232)" stroke-width="8.42"/>
<line x1="332.90" y1="120.84" x2="331.75" y2="121.85" stroke="rgb(232,232,232)" stroke-width="8.45"/>
<line x1="334.07" y1="119.85" x2="332.90" y2="120.84" stroke="rgb(233,233,233)" stroke-width="8.48"/>
<line x1="335.26" y1="118.89" x2="334.07" y2="119.85" stroke="rgb(234,234,234)" stroke-width="8.51"/>
<line x1="336.46" y1="117.95" x2="335.26" y2="118.89" stroke="rgb(234,234,234)" stroke-width="8.54"/>
<line x1="337.69" y1="117.04" x2="336.46" y2="117.95" stroke="rgb(235,235,235)" stroke-width="8.57"/>
<line x1="338.94" y1="116.16" x2="337.69" y2="117.04" stroke="rgb(235,235,235)" stroke-width="8.61"/>
<line x1="340.20" y1="115.30" x2="338.94" y2="116.16" stroke="rgb(236,236,236)" stroke-width="8.64"/>
<line x1="341.48" y1="114.46" x2="340.20" y2="115.30" stroke="rgb(237,237,237)" stroke-width="8.67"/>
<line x1="342.78" y1="113.66" x2="341.48" y2="114.46" stroke="rgb(237,237,237)" stroke-width="8.70"/>
<line x1="344.10" y1="112.88" x2="342.78" y2="113.66" stroke="rgb(238,238,238)" stroke-width="8.73"/>
<line x1="345.43" y1="112.13" x2="344.10" y2="112.88" stroke="rgb(238,238,238)" stroke-width="8.76"/>
<line x1="346.78" y1="111.41" x2="345.43" y2="112.13" stroke="rgb(239,239,239)" stroke-width="8.79"/>
<line x1="348.14" y1="110.71" x2="346.78" y2="111.41" stroke="rgb(239,239,239)" stroke-width="8.82"/>
<line x1="349.52" y1="110.05" x2="348.14" y2="110.71" stroke="rgb(240,240,240)" stroke-width="8.85"/>
<line x1="350.91" y1="109.41" x2="349.52" y2="110.05" stroke="rgb(241,241,241)" stroke-width="8.88"/>
<line x1="352.31" y1="108.80" x2="350.91" y2="109.41" stroke="rgb(241,241,241)" stroke-width="8.91"/>
<line x1="353.73" y1="108.23" x2="352.31" y2="108.80" stroke="rgb(242,242,242)" stroke-width="8.94"/>
<line x1="355.15" y1="107.68" x2="353.73" y2="108.23" stroke="rgb(242,242,242)" stroke-width="8.97"/>
<line x1="356.59" y1="107.16" x2="355.15" y2="107.68" stroke="rgb(243,243,243)" stroke-width="9.00"/>
<line x1="358.04" y1="106.67" x2="356.59" y2="107.16" stroke="rgb(243,243,243)" stroke-width="9.03"/>
<line x1="359.50" y1="106.22" x2="358.04" y2="106.67" stroke="rgb(244,244,244)" stroke-width="9.06"/>
<line x1="360.97" y1="105.79" x2="359.50" y2="106.22" stroke="rgb(244,244,244)" stroke-width="9.09"/>
<line x1="362.45" y1="105.39" x2="360.97" y2="105.79" stroke="rgb(245,245,245)" stroke-width="9.12"/>
<line x1="363.93" y1="105.03" x2="362.45" y2="105.39" stroke="rgb(245,245,245)" stroke-width="9.15"/>
<line x1="365.42" y1="104.70" x2="363.93" y2="105.03" stroke="rgb(246,246,246)" stroke-width="9.18"/>
<line x1="366.92" y1="104.39" x2="365.42" y2="104.70" stroke="rgb(246,246,246)" stroke-width="9.21"/>
<line x1="368.43" y1="104.12" x2="366.92" y2="104.39" stroke="rgb(246,246,246)" stroke-width="9.24"/>
<line x1="369.94" y1="103.88" x2="368.43" y2="104.12" stroke="rgb(247,247,247)" stroke-width="9.27"/>
<line x1="371.45" y1="103.68" x2="369.94" y2="103.88" stroke="rgb(247,247,247)" stroke-width="9.30"/>
<line x1="372.97" y1="103.50" x2="371.45" y2="103.68" stroke="rgb(248,248,248)" stroke-width="9.33"/>
<line x1="374.49" y1="103.36" x2="372.97" y2="103.50" stroke="rgb(248,248,248)" stroke-width="9.36"/>
<line x1="376.02" y1="103.24" x2="374.49" y2="103.36" stroke="rgb(249,249,249)" stroke-width="9.39"/>
<line x1="377.54" y1="103.16" x2="376.02" y2="103.24" stroke="rgb(249,249,249)" stroke-width="9.42"/>
<line x1="379.07" y1="103.12" x2="377.54" y2="103.16" stroke="rgb(249,249,249)" stroke-width="9.45"/>
<line x1="380.60" y1="103.10" x2="379.07" y2="103.12" stroke="rgb(250,250,250)" stroke-width="9.48"/></g></svg>
<svg class="a" style="left:0;top:0;will-change:transform" width="695" height="409" viewBox="0 0 695 409" font-family="Liberation Sans"><text transform="translate(213.00 21.97) scale(0.8929 1)" font-size="5.036" fill="#c6c6c6" style="">Snapping</text>
<text transform="translate(426.00 21.93) scale(0.8929 1)" font-size="4.949" fill="#47a6ff" style="">Default</text>
<text transform="translate(456.50 21.76) scale(0.8929 1)" font-size="4.599" fill="#bcbcbc" style="">Learn</text>
<text transform="translate(482.80 21.91) scale(0.8929 1)" font-size="4.912" fill="#bcbcbc" style="">Standard</text>
<text transform="translate(515.90 21.82) scale(0.8929 1)" font-size="4.727" fill="#bcbcbc" style="">Small Screen</text>
<text transform="translate(557.00 21.90) scale(0.8929 1)" font-size="4.892" fill="#bcbcbc" style="">Libraries</text>
<text transform="translate(619.90 21.71) scale(0.8929 1)" font-size="4.498" fill="#c6c6c6" style="">Search Help</text>
<text transform="translate(35.30 32.09) scale(0.8929 1)" font-size="4.658" fill="#c6c6c6" style="">Effect Controls</text>
<text transform="translate(63.00 32.09) scale(0.8929 1)" font-size="4.658" fill="#59b6ff" style="">White Solid 1</text>
<text transform="translate(102.00 32.10) scale(0.8929 1)" font-size="4.678" fill="#bcbcbc" style="">Project</text>
<text transform="translate(13.00 40.75) scale(0.8929 1)" font-size="4.568" fill="#bcbcbc" style="">Comp 1 • White Solid 1</text>
<text transform="translate(24.70 47.72) scale(0.8929 1)" font-size="4.515" fill="#d9d9d9" style="">Three Stroke</text>
<text transform="translate(94.20 47.57) scale(0.8929 1)" font-size="4.202" fill="#47a6ff" style="">Reset</text>
<text transform="translate(23.80 54.10) scale(0.8929 1)" font-size="4.543" fill="#c6c6c6" style="">Mask</text>
<text transform="translate(96.80 54.12) scale(0.8929 1)" font-size="4.587" fill="#ffffff" style="">Mask 1</text>
<text transform="translate(30.00 60.46) scale(0.8929 1)" font-size="4.560" fill="#bcbcbc" style="">Force Path Open</text>
<text transform="translate(23.30 66.94) scale(0.8929 1)" font-size="4.800" fill="#bcbcbc" style="">Width Controls</text>
<text transform="translate(37.00 73.28) scale(0.8929 1)" font-size="4.776" fill="#bcbcbc" style="">Mode</text>
<text transform="translate(96.50 73.28) scale(0.8929 1)" font-size="4.776" fill="#f5f5f5" style="">Start &amp; End</text>
<text transform="translate(36.80 79.64) scale(0.8929 1)" font-size="4.776" fill="#bcbcbc" style="">Width Start</text>
<text transform="translate(94.70 79.64) scale(0.8929 1)" font-size="4.776" fill="#47a6ff" style="">10.0</text>
<text transform="translate(36.80 86.00) scale(0.8929 1)" font-size="4.776" fill="#bcbcbc" style="">Width End</text>
<text transform="translate(94.70 86.00) scale(0.8929 1)" font-size="4.776" fill="#47a6ff" style="">0.0</text>
<text transform="translate(36.80 92.36) scale(0.8929 1)" font-size="4.776" fill="#bcbcbc" style="">Width Multiplier</text>
<text transform="translate(94.70 92.36) scale(0.8929 1)" font-size="4.776" fill="#47a6ff" style="">1.0</text>
<text transform="translate(23.80 98.72) scale(0.8929 1)" font-size="4.776" fill="#bcbcbc" style="">Style</text>
<text transform="translate(36.80 105.08) scale(0.8929 1)" font-size="4.776" fill="#bcbcbc" style="">Cap</text>
<text transform="translate(96.50 105.08) scale(0.8929 1)" font-size="4.776" fill="#f5f5f5" style="">Round</text>
<text transform="translate(36.80 111.45) scale(0.8929 1)" font-size="4.796" fill="#bcbcbc" style="">Width Interpolation</text>
<text transform="translate(96.50 111.44) scale(0.8929 1)" font-size="4.776" fill="#f5f5f5" style="">Linear</text>
<text transform="translate(29.60 117.80) scale(0.8929 1)" font-size="4.776" fill="#bcbcbc" style="">Color</text>
<text transform="translate(43.10 124.16) scale(0.8929 1)" font-size="4.776" fill="#bcbcbc" style="">Mode</text>
<text transform="translate(96.50 124.16) scale(0.8929 1)" font-size="4.776" fill="#f5f5f5" style="">Gradient 2</text>
<text transform="translate(43.10 130.52) scale(0.8929 1)" font-size="4.776" fill="#bcbcbc" style="">Color A</text>
<text transform="translate(43.10 136.88) scale(0.8929 1)" font-size="4.776" fill="#bcbcbc" style="">Color B</text>
<text transform="translate(43.10 143.24) scale(0.8929 1)" font-size="4.776" fill="#bcbcbc" style="">Cycle</text>
<text transform="translate(94.50 143.24) scale(0.8929 1)" font-size="4.776" fill="#47a6ff" style="">0x+0.0°</text>
<text transform="translate(43.10 149.60) scale(0.8929 1)" font-size="4.776" fill="#bcbcbc" style="">Loop Colors</text>
<text transform="translate(107.50 155.91) scale(0.8929 1)" font-size="4.659" fill="#bcbcbc" style="">Swap Colors</text>
<text transform="translate(36.80 162.32) scale(0.8929 1)" font-size="4.776" fill="#bcbcbc" style="">Reverse Draw Order</text>
<text transform="translate(23.60 168.68) scale(0.8929 1)" font-size="4.776" fill="#bcbcbc" style="">Trim Paths</text>
<text transform="translate(23.60 175.04) scale(0.8929 1)" font-size="4.776" fill="#bcbcbc" style="">Quality</text>
<text transform="translate(15.50 277.68) scale(0.8929 1)" font-size="4.421" fill="#ececec" style="">OCD Renamer</text>
<text transform="translate(56.60 277.87) scale(0.8929 1)" font-size="4.832" fill="#a9a9a9" style="">File Hunter</text>
<text transform="translate(55.80 290.64) scale(0.8929 1)" font-size="4.543" fill="#ececec" style="">Replace</text>
<text transform="translate(190.30 32.10) scale(0.8929 1)" font-size="4.675" fill="#c6c6c6" style="">Composition</text>
<text transform="translate(215.00 31.78) scale(0.8929 1)" font-size="3.999" fill="#59b6ff" style="">Comp 1</text>
<text transform="translate(248.60 32.11) scale(0.8929 1)" font-size="4.702" fill="#bcbcbc" style="">Layer (none)</text>
<text transform="translate(298.70 32.02) scale(0.8929 1)" font-size="4.505" fill="#bcbcbc" style="">Footage (none)</text>
<text transform="translate(177.30 41.06) scale(0.8929 1)" font-size="4.382" fill="#47a6ff" style="">Comp 1</text>
<text transform="translate(193.90 297.18) scale(0.8929 1)" font-size="4.423" fill="#dfdfdf" style="">100%</text>
<text transform="translate(237.80 297.21) scale(0.8929 1)" font-size="4.479" fill="#a6a6a6" style="">0:00:00:00</text>
<text transform="translate(287.90 297.29) scale(0.8929 1)" font-size="4.659" fill="#dfdfdf" style="">Full</text>
<text transform="translate(338.50 297.21) scale(0.8929 1)" font-size="4.492" fill="#dfdfdf" style="">Active Camera</text>
<text transform="translate(379.70 297.27) scale(0.8929 1)" font-size="4.618" fill="#dfdfdf" style="">1 View</text>
<text transform="translate(447.50 296.78) scale(0.8929 1)" font-size="3.574" fill="#47a6ff" style="">+0.0</text>
<text transform="translate(611.00 32.08) scale(0.8929 1)" font-size="4.642" fill="#b5b5b5" style="">Audio</text>
<text transform="translate(636.70 32.01) scale(0.8929 1)" font-size="4.499" fill="#ececec" style="">Info</text>
<text transform="translate(618.70 41.18) scale(0.8929 1)" font-size="4.426" fill="#c6c6c6" style="">R :</text>
<text transform="translate(618.70 46.45) scale(0.8929 1)" font-size="4.426" fill="#c6c6c6" style="">G :</text>
<text transform="translate(618.70 51.72) scale(0.8929 1)" font-size="4.426" fill="#c6c6c6" style="">B :</text>
<text transform="translate(618.70 56.99) scale(0.8929 1)" font-size="4.426" fill="#c6c6c6" style="">A :  0</text>
<text transform="translate(652.40 41.18) scale(0.8929 1)" font-size="4.426" fill="#c6c6c6" style="">X : -76</text>
<text transform="translate(652.40 46.48) scale(0.8929 1)" font-size="4.426" fill="#c6c6c6" style="">Y : 356</text>
<text transform="translate(611.00 87.07) scale(0.8929 1)" font-size="4.409" fill="#ececec" style="">Preview</text>
<text transform="translate(611.00 109.32) scale(0.8929 1)" font-size="4.089" fill="#a2a2a2" style="">Libraries</text>
<text transform="translate(640.30 109.11) scale(0.8929 1)" font-size="3.648" fill="#ececec" style="">Character</text>
<text transform="translate(611.00 121.14) scale(0.8929 1)" font-size="4.543" fill="#ececec" style="">Phosphate</text>
<text transform="translate(611.00 130.14) scale(0.8929 1)" font-size="4.543" fill="#ececec" style="">Inline</text>
<text transform="translate(618.20 140.54) scale(0.8929 1)" font-size="4.543" fill="#47a6ff" style="">36</text>
<text transform="translate(624.30 140.54) scale(0.8929 1)" font-size="4.543" fill="#b5b5b5" style="">px</text>
<text transform="translate(660.00 140.54) scale(0.8929 1)" font-size="4.543" fill="#47a6ff" style="">30</text>
<text transform="translate(666.10 140.54) scale(0.8929 1)" font-size="4.543" fill="#b5b5b5" style="">px</text>
<text transform="translate(618.20 148.54) scale(0.8929 1)" font-size="4.543" fill="#777" style="">Metrics</text>
<text transform="translate(660.00 148.54) scale(0.8929 1)" font-size="4.543" fill="#47a6ff" style="">-23</text>
<text transform="translate(618.20 159.64) scale(0.8929 1)" font-size="4.543" fill="#999" style="">- px</text>
<text transform="translate(618.20 171.34) scale(0.8929 1)" font-size="4.543" fill="#47a6ff" style="">100</text>
<text transform="translate(626.60 171.34) scale(0.8929 1)" font-size="4.543" fill="#b5b5b5" style="">%</text>
<text transform="translate(660.00 171.34) scale(0.8929 1)" font-size="4.543" fill="#47a6ff" style="">100</text>
<text transform="translate(668.40 171.34) scale(0.8929 1)" font-size="4.543" fill="#b5b5b5" style="">%</text>
<text transform="translate(618.20 179.34) scale(0.8929 1)" font-size="4.543" fill="#47a6ff" style="">0</text>
<text transform="translate(622.20 179.34) scale(0.8929 1)" font-size="4.543" fill="#b5b5b5" style="">px</text>
<text transform="translate(660.00 179.34) scale(0.8929 1)" font-size="4.543" fill="#47a6ff" style="">0</text>
<text transform="translate(664.00 179.34) scale(0.8929 1)" font-size="4.543" fill="#b5b5b5" style="">%</text>
<text transform="translate(617.00 201.38) scale(0.8929 1)" font-size="4.629" fill="#b5b5b5" style="">Ligatures</text>
<text transform="translate(655.30 201.80) scale(0.8929 1)" font-size="5.537" fill="#b5b5b5" style="">Hindi Digits</text>
<text transform="translate(21.30 308.41) scale(0.8929 1)" font-size="4.491" fill="#a2a2a2" style="">Render Queue</text>
<text transform="translate(76.20 308.40) scale(0.8929 1)" font-size="4.478" fill="#f4f4f4" style="">Comp 1</text>
<text transform="translate(16.10 319.05) scale(0.8929 1)" font-size="6.493" fill="#44a2ff" style="font-weight:bold;">0:00:00:00</text>
<text transform="translate(16.00 322.98) scale(0.8929 1)" font-size="4.001" fill="#3780cf" style="">00000 (30.00 fps)</text>
<text transform="translate(51.30 330.38) scale(0.8929 1)" font-size="4.426" fill="#888" style="">#</text>
<text transform="translate(63.90 330.38) scale(0.8929 1)" font-size="4.426" fill="#6a6a6a" style="">Layer Name</text>
<text transform="translate(143.80 330.49) scale(0.8929 1)" font-size="4.659" fill="#bbb" style="font-family:'Liberation Serif';"><tspan font-style="italic">fx</tspan></text>
<text transform="translate(178.30 330.38) scale(0.8929 1)" font-size="4.426" fill="#777" style="">Mode</text>
<text transform="translate(217.30 330.38) scale(0.8929 1)" font-size="4.426" fill="#777" style="">T</text>
<text transform="translate(223.90 330.38) scale(0.8929 1)" font-size="4.426" fill="#777" style="">TrkMat</text>
<text transform="translate(264.00 330.38) scale(0.8929 1)" font-size="4.426" fill="#777" style="">Parent &amp; Link</text>
<text transform="translate(51.80 337.24) scale(0.8929 1)" font-size="4.543" fill="#dfdfdf" style="">1</text>
<text transform="translate(69.40 337.48) scale(0.8929 1)" font-size="5.055" fill="#dfdfdf" style="">[White Solid 1]</text>
<text transform="translate(179.50 337.34) scale(0.8929 1)" font-size="4.776" fill="#f4f4f4" style="">Normal</text>
<text transform="translate(143.80 337.29) scale(0.8929 1)" font-size="4.659" fill="#bbb" style="font-family:'Liberation Serif';"><tspan font-style="italic">fx</tspan></text>
<text transform="translate(273.50 337.34) scale(0.8929 1)" font-size="4.776" fill="#f4f4f4" style="">None</text>
<text transform="translate(64.20 343.65) scale(0.8929 1)" font-size="4.587" fill="#bcbcbc" style="">Mask 1</text>
<text transform="translate(70.20 349.97) scale(0.8929 1)" font-size="4.457" fill="#b5b5b5" style="">Mask Path</text>
<text transform="translate(126.60 349.77) scale(0.8929 1)" font-size="4.029" fill="#47a6ff" style="">Shape...</text>
<text transform="translate(64.20 356.41) scale(0.8929 1)" font-size="4.543" fill="#bcbcbc" style="">Mask 2</text>
<text transform="translate(70.20 362.75) scale(0.8929 1)" font-size="4.457" fill="#b5b5b5" style="">Mask Path</text>
<text transform="translate(126.60 362.55) scale(0.8929 1)" font-size="4.029" fill="#47a6ff" style="">Shape...</text>
<text transform="translate(64.20 369.19) scale(0.8929 1)" font-size="4.543" fill="#bcbcbc" style="">Mask 3</text>
<text transform="translate(70.20 375.53) scale(0.8929 1)" font-size="4.457" fill="#b5b5b5" style="">Mask Path</text>
<text transform="translate(126.60 375.33) scale(0.8929 1)" font-size="4.029" fill="#47a6ff" style="">Shape...</text>
<text transform="translate(128.30 343.63) scale(0.8929 1)" font-size="4.543" fill="#f4f4f4" style="">None</text>
<text transform="translate(157.40 343.76) scale(0.8929 1)" font-size="4.836" fill="#b5b5b5" style="">Inverted</text>
<text transform="translate(51.40 381.97) scale(0.8929 1)" font-size="4.543" fill="#a2a2a2" style="">Effects</text>
<text transform="translate(51.80 388.36) scale(0.8929 1)" font-size="4.543" fill="#dfdfdf" style="">2</text>
<text transform="translate(69.40 388.65) scale(0.8929 1)" font-size="5.177" fill="#dfdfdf" style="">[Gray Solid 1]</text>
<text transform="translate(179.50 388.46) scale(0.8929 1)" font-size="4.776" fill="#f4f4f4" style="">Normal</text>
<text transform="translate(221.40 388.46) scale(0.8929 1)" font-size="4.776" fill="#f4f4f4" style="">None</text>
<text transform="translate(273.50 388.46) scale(0.8929 1)" font-size="4.776" fill="#f4f4f4" style="">None</text>
<text transform="translate(315.90 322.26) scale(0.8929 1)" font-size="3.960" fill="#a2a2a2" style="">0f</text>
<text transform="translate(339.05 322.26) scale(0.8929 1)" font-size="3.960" fill="#a2a2a2" style="">05f</text>
<text transform="translate(366.25 322.26) scale(0.8929 1)" font-size="3.960" fill="#a2a2a2" style="">10f</text>
<text transform="translate(393.05 322.26) scale(0.8929 1)" font-size="3.960" fill="#a2a2a2" style="">15f</text>
<text transform="translate(420.15 322.26) scale(0.8929 1)" font-size="3.960" fill="#a2a2a2" style="">20f</text>
<text transform="translate(447.25 322.26) scale(0.8929 1)" font-size="3.960" fill="#a2a2a2" style="">25f</text>
<text transform="translate(471.20 322.26) scale(0.8929 1)" font-size="3.960" fill="#a2a2a2" style="">01:00f</text>
<text transform="translate(500.85 322.26) scale(0.8929 1)" font-size="3.960" fill="#a2a2a2" style="">05f</text>
<text transform="translate(527.45 322.26) scale(0.8929 1)" font-size="3.960" fill="#a2a2a2" style="">10f</text>
<text transform="translate(554.85 322.26) scale(0.8929 1)" font-size="3.960" fill="#a2a2a2" style="">15f</text>
<text transform="translate(581.95 322.26) scale(0.8929 1)" font-size="3.960" fill="#a2a2a2" style="">20f</text>
<text transform="translate(606.50 308.34) scale(0.8929 1)" font-size="4.543" fill="#777" style="">ign</text>
<text transform="translate(627.00 308.34) scale(0.8929 1)" font-size="4.557" fill="#f4f4f4" style="">Paragraph</text>
<text transform="translate(660.90 308.34) scale(0.8929 1)" font-size="4.543" fill="#777" style="">BG 1</text>
<text transform="translate(616.70 329.58) scale(0.8929 1)" font-size="4.426" fill="#a2a2a2" style="">0 px</text>
<text transform="translate(644.50 329.58) scale(0.8929 1)" font-size="4.426" fill="#a2a2a2" style="">0 px</text>
<text transform="translate(669.00 329.58) scale(0.8929 1)" font-size="4.426" fill="#a2a2a2" style="">0 px</text>
<text transform="translate(616.70 336.98) scale(0.8929 1)" font-size="4.426" fill="#a2a2a2" style="">0 px</text>
<text transform="translate(644.50 336.98) scale(0.8929 1)" font-size="4.426" fill="#a2a2a2" style="">0 px</text></svg>
<svg class="a" style="left:0;top:0" width="695" height="409" viewBox="0 0 695 409"><path d="M18 16.4 L22.9 21.1 L20.3 21.1 L18.2 22.6 Z" fill="#3a7fd8" stroke="#0c1a2c" stroke-width="0.3"/><path d="M26.2 19.6 L27.3 19.2 L27.4 17.4 L28.3 17.2 L28.6 16.6 L29.5 16.6 L29.9 17.1 L30.8 17.2 L31.1 17.9 L32 18.2 L31.8 20.8 L30.4 22.4 L28.3 22.4 Z" fill="#d0d0d0"/><circle cx="38.5" cy="18.8" r="1.9" fill="none" stroke="#bdbdbd" stroke-width="0.7"/><line x1="39.9" y1="20.2" x2="41.8" y2="22" stroke="#bdbdbd" stroke-width="0.8"/><path d="M49.5 17.5 A2.3 2.3 0 1 1 49.3 21.6" fill="none" stroke="#bdbdbd" stroke-width="0.7"/><path d="M48.5 16.8 L50.3 17.2 L49.3 18.6Z" fill="#bdbdbd"/><rect x="56.5" y="17.3" width="4" height="4" fill="#d0d0d0"/><path d="M60.5 18.5 L63 17.3 L63 21.3 L60.5 20.2Z" fill="#d0d0d0"/><rect x="65.8" y="17" width="5" height="5" fill="none" stroke="#bdbdbd" stroke-width="0.7"/><path d="M66.5 17.7 L70.3 21.3 M70.3 17.7 L66.5 21.3" stroke="#bdbdbd" stroke-width="0.6"/><ellipse cx="81" cy="19.3" rx="2.6" ry="2.2" fill="none" stroke="#a9a9a9" stroke-width="0.8"/><path d="M87.5 22 L91.5 17" stroke="#bdbdbd" stroke-width="0.8"/><path d="M109.5 22 L114 17.3" stroke="#d0d0d0" stroke-width="1.1"/><path d="M121.5 17 L121.5 20 M119.5 20.5 L123.5 20.5 M119 21.8 L124 21.8" stroke="#d0d0d0" stroke-width="0.9"/><path d="M128.8 20.3 L131.5 17.2 L133.8 19.2 L131 22.2 Z" fill="#d0d0d0"/><path d="M140.5 18 L142.5 21.5 L145.5 17 M141 21.5 L146 21.5" stroke="#c8c8c8" stroke-width="0.8" fill="none"/><path d="M151.5 22 L154.5 18.5" stroke="#c8c8c8" stroke-width="0.8"/><path d="M153.5 17.5 L156 17 L156.5 19.5 L154.8 20.3Z" fill="#c8c8c8"/><path d="M188 22 L190.5 17 M195.5 22 L198 17" stroke="#333" stroke-width="0.8"/><rect x="208.3" y="17.5" width="3.6" height="3.8" fill="none" stroke="#b0b0b0" stroke-width="0.6"/><path d="M236.5 21.5 L240.5 17.5 M238.5 17.5 L240.5 17.5 L240.5 19.5" stroke="#b0b0b0" stroke-width="0.6" fill="none"/><path d="M246 17.3 L247 18.3 M250.5 17.3 L249.5 18.3 M246 21.7 L247 20.7 M250.5 21.7 L249.5 20.7" stroke="#3b86dd" stroke-width="0.7" fill="none"/><path d="M443.7 18.3 H446.8 M443.7 19.5 H446.8 M443.7 20.7 H446.8" stroke="#3d8de0" stroke-width="0.5"/><path d="M589 18 L590.3 19.5 L589 21 M591 18 L592.3 19.5 L591 21" stroke="#b0b0b0" stroke-width="0.6" fill="none"/><rect x="597" y="17.5" width="8" height="4.2" fill="#cfcfcf"/><circle cx="599.5" cy="19.6" r="1.1" fill="#333"/><rect x="602" y="18.5" width="1.8" height="2.4" fill="#333"/><circle cx="614" cy="18.8" r="1.4" fill="none" stroke="#bdbdbd" stroke-width="0.55"/><line x1="613" y1="19.8" x2="611.8" y2="21.2" stroke="#bdbdbd" stroke-width="0.6"/><path d="M14.7 28.8 L16.7 30.8 M16.7 28.8 L14.7 30.8" stroke="#888" stroke-width="0.5"/><path d="M29.4 29.8 V28.6 A0.9 0.9 0 0 1 31.2 28.6 V29" stroke="#c8c8c8" stroke-width="0.5" fill="none"/><rect x="28.9" y="29.7" width="3" height="2" fill="#c8c8c8"/><circle cx="92" cy="29.8" r="1.5" fill="#666"/><path d="M14.10 44.80 L15.30 46.30 L16.50 44.80" stroke="#9a9a9a" stroke-width="0.6" fill="none"/><path d="M18.9 47.90 Q19.8 47.60 20.2 45.60 T21.6 43.50 M19.4 45.00 H21.1 M21.2 45.00 L23.2 47.60 M23.2 45.00 L21.2 47.60" stroke="#bdbdbd" stroke-width="0.5" fill="none"/><path d="M137.60 51.16 L138.80 52.66 L140.00 51.16" stroke="#9a9a9a" stroke-width="0.6" fill="none"/><circle cx="26.40" cy="58.62" r="1.75" fill="none" stroke="#a8a8a8" stroke-width="0.6"/><path d="M25.70 56.52 H27.10" stroke="#a8a8a8" stroke-width="0.6"/><rect x="94.50" y="56.32" width="3.8" height="3.8" rx="0.4" fill="none" stroke="#a8a8a8" stroke-width="0.6"/><path d="M20.30 63.88 L21.50 65.38 L22.70 63.88" stroke="#888" stroke-width="0.6" fill="none"/><circle cx="33.30" cy="71.34" r="1.75" fill="none" stroke="#a8a8a8" stroke-width="0.6"/><path d="M32.60 69.24 H34.00" stroke="#a8a8a8" stroke-width="0.6"/><path d="M141.80 70.24 L143.00 71.74 L144.20 70.24" stroke="#9a9a9a" stroke-width="0.6" fill="none"/><path d="M26.40 76.20 L27.70 77.40 L26.40 78.60" stroke="#888" stroke-width="0.6" fill="none"/><circle cx="33.20" cy="77.70" r="1.75" fill="none" stroke="#a8a8a8" stroke-width="0.6"/><path d="M32.50 75.60 H33.90" stroke="#a8a8a8" stroke-width="0.6"/><path d="M26.40 82.56 L27.70 83.76 L26.40 84.96" stroke="#888" stroke-width="0.6" fill="none"/><circle cx="33.20" cy="84.06" r="1.75" fill="none" stroke="#a8a8a8" stroke-width="0.6"/><path d="M32.50 81.96 H33.90" stroke="#a8a8a8" stroke-width="0.6"/><path d="M26.40 88.92 L27.70 90.12 L26.40 91.32" stroke="#888" stroke-width="0.6" fill="none"/><circle cx="33.20" cy="90.42" r="1.75" fill="none" stroke="#a8a8a8" stroke-width="0.6"/><path d="M32.50 88.32 H33.90" stroke="#a8a8a8" stroke-width="0.6"/><path d="M66 87.3 L66 93 L67.3 91.8 L68.5 94 L69.3 93.6 L68.2 91.5 L70 91.3 Z" fill="#f0f0f0" stroke="#111" stroke-width="0.4"/><path d="M20.30 95.68 L21.50 97.18 L22.70 95.68" stroke="#888" stroke-width="0.6" fill="none"/><circle cx="33.30" cy="103.14" r="1.75" fill="none" stroke="#a8a8a8" stroke-width="0.6"/><path d="M32.60 101.04 H34.00" stroke="#a8a8a8" stroke-width="0.6"/><path d="M138.30 102.04 L139.50 103.54 L140.70 102.04" stroke="#9a9a9a" stroke-width="0.6" fill="none"/><circle cx="33.30" cy="109.50" r="1.75" fill="none" stroke="#a8a8a8" stroke-width="0.6"/><path d="M32.60 107.40 H34.00" stroke="#a8a8a8" stroke-width="0.6"/><path d="M138.30 108.40 L139.50 109.90 L140.70 108.40" stroke="#9a9a9a" stroke-width="0.6" fill="none"/><path d="M26.60 114.76 L27.80 116.26 L29.00 114.76" stroke="#888" stroke-width="0.6" fill="none"/><circle cx="39.30" cy="122.22" r="1.75" fill="none" stroke="#a8a8a8" stroke-width="0.6"/><path d="M38.60 120.12 H40.00" stroke="#a8a8a8" stroke-width="0.6"/><path d="M138.30 121.12 L139.50 122.62 L140.70 121.12" stroke="#9a9a9a" stroke-width="0.6" fill="none"/><circle cx="39.30" cy="128.58" r="1.75" fill="none" stroke="#a8a8a8" stroke-width="0.6"/><path d="M38.60 126.48 H40.00" stroke="#a8a8a8" stroke-width="0.6"/><rect x="104.3" y="126.08" width="8.2" height="4.4" fill="none" stroke="#8a8a8a" stroke-width="0.5"/><path d="M106 129.28 L109 127.28" stroke="#bbb" stroke-width="0.6"/><rect x="108.6" y="126.78" width="3" height="2.5" fill="#ddd"/><circle cx="39.30" cy="134.94" r="1.75" fill="none" stroke="#a8a8a8" stroke-width="0.6"/><path d="M38.60 132.84 H40.00" stroke="#a8a8a8" stroke-width="0.6"/><rect x="104.3" y="132.44" width="8.2" height="4.4" fill="none" stroke="#8a8a8a" stroke-width="0.5"/><path d="M106 135.64 L109 133.64" stroke="#bbb" stroke-width="0.6"/><rect x="108.6" y="133.14" width="3" height="2.5" fill="#ddd"/><path d="M33.20 139.80 L34.50 141.00 L33.20 142.20" stroke="#888" stroke-width="0.6" fill="none"/><circle cx="39.30" cy="141.30" r="1.75" fill="none" stroke="#a8a8a8" stroke-width="0.6"/><path d="M38.60 139.20 H40.00" stroke="#a8a8a8" stroke-width="0.6"/><circle cx="39.30" cy="147.66" r="1.75" fill="none" stroke="#a8a8a8" stroke-width="0.6"/><path d="M38.60 145.56 H40.00" stroke="#a8a8a8" stroke-width="0.6"/><rect x="94.50" y="145.36" width="3.8" height="3.8" rx="0.4" fill="none" stroke="#a8a8a8" stroke-width="0.6"/><rect x="94.50" y="145.36" width="3.8" height="3.8" rx="0.4" fill="#9a9a9a"/><path d="M95.20 147.36 L96.10 148.36 L97.70 146.16" stroke="#222" stroke-width="0.6" fill="none"/><circle cx="33.30" cy="160.38" r="1.75" fill="none" stroke="#a8a8a8" stroke-width="0.6"/><path d="M32.60 158.28 H34.00" stroke="#a8a8a8" stroke-width="0.6"/><rect x="94.50" y="158.08" width="3.8" height="3.8" rx="0.4" fill="none" stroke="#a8a8a8" stroke-width="0.6"/><path d="M20.40 165.24 L21.70 166.44 L20.40 167.64" stroke="#888" stroke-width="0.6" fill="none"/><path d="M20.40 171.60 L21.70 172.80 L20.40 174.00" stroke="#888" stroke-width="0.6" fill="none"/><path d="M44.8 274.6 H47.6 M44.8 275.6 H47.6 M44.8 276.6 H47.6" stroke="#888" stroke-width="0.4"/><path d="M15 291.50 Q16.2 291.10 16.7 288.50 T18.6 285.70 M15.6 287.60 H17.9 M18 287.90 L20.8 290.90 M20.8 287.90 L18 290.90" stroke="#8a8a8a" stroke-width="0.6" fill="none"/><circle cx="27.4" cy="288.5" r="2.4" fill="none" stroke="#8a8a8a" stroke-width="0.6"/><path d="M25.9 290 L28.9 287" stroke="#8a8a8a" stroke-width="0.6"/><circle cx="27.4" cy="288.5" r="1.1" fill="none" stroke="#8a8a8a" stroke-width="0.5"/><circle cx="37" cy="288.5" r="2.4" fill="none" stroke="#a8a8a8" stroke-width="0.6"/><circle cx="37" cy="288.5" r="1" fill="none" stroke="#a8a8a8" stroke-width="0.6"/><circle cx="45.5" cy="287" r="1.1" fill="#b8b8b8"/><rect x="46.5" y="288.2" width="4" height="2.6" fill="#b8b8b8"/><path d="M47.2 289.5 H50" stroke="#333" stroke-width="0.4"/><path d="M74.80 287.70 L76.00 289.20 L77.20 287.70" stroke="#777" stroke-width="0.6" fill="none"/><circle cx="85.3" cy="288.5" r="1.7" fill="none" stroke="#b8b8b8" stroke-width="0.9"/><circle cx="85.3" cy="288.5" r="2.7" fill="none" stroke="#b8b8b8" stroke-width="0.9" stroke-dasharray="0.9 0.8"/><path d="M170.2 28.9 L171.9 30.6 M171.9 28.9 L170.2 30.6" stroke="#888" stroke-width="0.5"/><path d="M184.3 29.8 V28.6 A0.9 0.9 0 0 1 186.1 28.6 V29" stroke="#c8c8c8" stroke-width="0.5" fill="none"/><rect x="183.8" y="29.7" width="3" height="2" fill="#c8c8c8"/><path d="M231.6 28.9 H234.4 M231.6 29.9 H234.4 M231.6 30.9 H234.4" stroke="#888" stroke-width="0.45"/><path d="M169 294 L172 296.5 M168.8 296.8 H172.5" stroke="#b8b8b8" stroke-width="0.6"/><rect x="169.5" y="293.3" width="2.5" height="2" fill="#bbb"/><rect x="177" y="293.3" width="3.6" height="3" rx="0.6" fill="none" stroke="#b8b8b8" stroke-width="0.6"/><path d="M178 297.2 H179.6" stroke="#b8b8b8" stroke-width="0.5"/><rect x="185.4" y="293.2" width="3.8" height="2.6" fill="none" stroke="#b8b8b8" stroke-width="0.6"/><path d="M186.4 294.4 H188.2" stroke="#b8b8b8" stroke-width="0.5"/><path d="M212.80 294.30 L214.00 295.80 L215.20 294.30" stroke="#aaa" stroke-width="0.6" fill="none"/><rect x="220.2" y="293" width="3.6" height="4.3" fill="none" stroke="#999" stroke-width="0.5"/><path d="M220.8 295.1 H223.2" stroke="#999" stroke-width="0.4"/><path d="M228.8 297 V293.8 H233.2 V297 Z" fill="none" stroke="#b8b8b8" stroke-width="0.55"/><rect x="262.9" y="293.6" width="4" height="3" fill="#bdbdbd"/><circle cx="264.9" cy="295.1" r="0.8" fill="#333"/><circle cx="273.5" cy="295.1" r="1.3" fill="#444"/><circle cx="280.6" cy="294.2" r="0.9" fill="#e04040"/><circle cx="282.2" cy="294.5" r="0.8" fill="#40b040"/><circle cx="281.4" cy="295.9" r="0.9" fill="#4070e0"/><path d="M313.60 294.30 L314.80 295.80 L316.00 294.30" stroke="#aaa" stroke-width="0.6" fill="none"/><rect x="320.8" y="293.1" width="4" height="4" fill="none" stroke="#bdbdbd" stroke-width="0.5"/><rect x="322.2" y="294.4" width="1.4" height="1.4" fill="#bbb"/><rect x="328.8" y="293.2" width="3.8" height="3.8" fill="none" stroke="#3b86dd" stroke-width="0.5"/><path d="M370.60 294.30 L371.80 295.80 L373.00 294.30" stroke="#aaa" stroke-width="0.6" fill="none"/><path d="M399.00 294.30 L400.20 295.80 L401.40 294.30" stroke="#aaa" stroke-width="0.6" fill="none"/><rect x="405.6" y="293.3" width="3.8" height="3.6" fill="none" stroke="#aaa" stroke-width="0.5"/><path d="M405.6 294.3 H409.4" stroke="#aaa" stroke-width="0.4"/><rect x="414" y="293" width="4" height="4" fill="none" stroke="#bdbdbd" stroke-width="0.5"/><path d="M415 295 L416.5 295 M416 294 L417 295 L416 296" stroke="#bbb" stroke-width="0.4" fill="none"/><path d="M422.5 297 V294.8 A2 2 0 0 1 426.5 294.8 V297 Z" fill="none" stroke="#bdbdbd" stroke-width="0.5"/><circle cx="432.5" cy="293.6" r="0.9" fill="#bdbdbd"/><circle cx="431" cy="296.5" r="0.9" fill="#bdbdbd"/><circle cx="434" cy="296.5" r="0.9" fill="#bdbdbd"/><circle cx="441.4" cy="295.1" r="1.2" fill="none" stroke="#bdbdbd" stroke-width="0.8"/><circle cx="441.4" cy="295.1" r="2" fill="none" stroke="#bdbdbd" stroke-width="0.6" stroke-dasharray="0.7 0.7"/><path d="M647.6 28.9 H650.2 M647.6 29.9 H650.2 M647.6 30.9 H650.2" stroke="#888" stroke-width="0.4"/><path d="M649.5 46.2 V48.8 M648.2 47.5 H650.8" stroke="#8a8a8a" stroke-width="0.4"/><path d="M629.6 84 H632.2 M629.6 85 H632.2 M629.6 86 H632.2" stroke="#888" stroke-width="0.4"/><path d="M624.6 93.2 V96.4 M628 93.2 L625.4 94.8 L628 96.4Z" stroke="#c0c0c0" stroke-width="0.5" fill="#c0c0c0"/><path d="M633.5 93.2 V96.4 M636.8 93.2 L634.2 94.8 L636.8 96.4Z" stroke="#c0c0c0" stroke-width="0.5" fill="#c0c0c0"/><path d="M642.5 93 L645.5 94.8 L642.5 96.6Z" fill="#c8c8c8"/><path d="M654.2 93.2 V96.4 M650.8 93.2 L653.4 94.8 L650.8 96.4Z" stroke="#c0c0c0" stroke-width="0.5" fill="#c0c0c0"/><path d="M663.6 93.2 V96.4 M660.2 93.2 L662.8 94.8 L660.2 96.4Z" stroke="#c0c0c0" stroke-width="0.5" fill="#c0c0c0"/><path d="M661.4 106.4 H664 M661.4 107.4 H664 M661.4 108.4 H664" stroke="#888" stroke-width="0.4"/><path d="M678.5 105.8 L679.8 107.3 L678.5 108.8 M680.5 105.8 L681.8 107.3 L680.5 108.8" stroke="#c0c0c0" stroke-width="0.6" fill="none"/><path d="M650.30 118.20 L651.50 119.70 L652.70 118.20" stroke="#aaa" stroke-width="0.6" fill="none"/><path d="M650.30 127.20 L651.50 128.70 L652.70 127.20" stroke="#aaa" stroke-width="0.6" fill="none"/><path d="M656.5 122.6 L660.8 118.2 M659.8 117.2 L662 119.4" stroke="#c8c8c8" stroke-width="0.8"/><path d="M671.5 130.4 L680.6 122.2" stroke="#e02020" stroke-width="0.8"/><path d="M678 115.5 A2 2 0 0 1 680.5 118" stroke="#bbb" stroke-width="0.5" fill="none"/><path d="M634.00 137.50 L636.40 137.50 L635.20 139.30Z" fill="#b0b0b0"/><path d="M648.5 141 H653 M650.7 135.5 L648.8 139 M650.7 135.5 L652.6 139" stroke="#bbb" stroke-width="0.6" fill="none"/><path d="M676.60 137.50 L679.00 137.50 L677.80 139.30Z" fill="#b0b0b0"/><path d="M634.00 145.50 L636.40 145.50 L635.20 147.30Z" fill="#b0b0b0"/><rect x="648.6" y="144.2" width="4.5" height="4.5" fill="none" stroke="#aaa" stroke-width="0.5"/><path d="M649.4 146.4 H652.4" stroke="#aaa" stroke-width="0.4"/><path d="M676.60 145.50 L679.00 145.50 L677.80 147.30Z" fill="#b0b0b0"/><path d="M609.5 155.8 H614 M609.5 157.5 H614 M609.5 159.2 H614" stroke="#bbb" stroke-width="0.6"/><path d="M634.00 156.60 L636.40 156.60 L635.20 158.40Z" fill="#b0b0b0"/><path d="M676.60 156.70 L677.80 158.20 L679.00 156.70" stroke="#777" stroke-width="0.6" fill="none"/><path d="M634.00 168.30 L636.40 168.30 L635.20 170.10Z" fill="#b0b0b0"/><path d="M676.60 168.30 L679.00 168.30 L677.80 170.10Z" fill="#b0b0b0"/><path d="M634.00 176.30 L636.40 176.30 L635.20 178.10Z" fill="#b0b0b0"/><path d="M648.5 179.5 H653 M650.7 174.5 V178" stroke="#bbb" stroke-width="0.6"/><path d="M676.60 176.30 L679.00 176.30 L677.80 178.10Z" fill="#b0b0b0"/><rect x="609.8" y="197.3" width="3.8" height="3.8" fill="none" stroke="#aaa" stroke-width="0.5"/><rect x="648.3" y="197.3" width="3.8" height="3.8" fill="none" stroke="#aaa" stroke-width="0.5"/><path d="M62.6 305.4 L64.2 307 M64.2 305.4 L62.6 307" stroke="#888" stroke-width="0.45"/><path d="M93.8 305.3 H96.6 M93.8 306.3 H96.6 M93.8 307.3 H96.6" stroke="#888" stroke-width="0.4"/><circle cx="54.6" cy="317.3" r="1.3" fill="none" stroke="#aaa" stroke-width="0.5"/><path d="M53.6 318.3 L52.5 319.6" stroke="#aaa" stroke-width="0.5"/><path d="M55.6 319.2 L56.8 319.2 L56.2 320Z" fill="#aaa"/><path d="M242.5 316 H246 L247.3 319.5 M244 317.5 H245.5" stroke="#b8b8b8" stroke-width="0.55" fill="none"/><circle cx="256.8" cy="316.8" r="1" fill="none" stroke="#b8b8b8" stroke-width="0.5"/><rect x="257" y="318" width="2.6" height="2" fill="none" stroke="#b8b8b8" stroke-width="0.5"/><path d="M267.8 320 H272.8 M268.3 318.8 L270.3 316 L272.3 318.8" stroke="#b8b8b8" stroke-width="0.6" fill="none"/><rect x="277.5" y="316" width="4" height="4" fill="#b8b8b8"/><path d="M277.5 317.3 H281.5 M277.5 318.6 H281.5" stroke="#444" stroke-width="0.3"/><path d="M287.5 320 L291.5 316" stroke="#b8b8b8" stroke-width="1.3" stroke-linecap="round"/><path d="M287.5 320 L291.5 316" stroke="#222" stroke-width="0.4"/><rect x="300.8" y="316" width="4.2" height="4.2" fill="none" stroke="#b8b8b8" stroke-width="0.55"/><path d="M301.8 317 L303.5 318.8" stroke="#b8b8b8" stroke-width="0.45"/><ellipse cx="15.5" cy="328.3" rx="1.6" ry="1" fill="none" stroke="#bbb" stroke-width="0.5"/><circle cx="15.5" cy="328.3" r="0.5" fill="#bbb"/><path d="M19.5 327.5 H20.5 L21.8 326.5 V330 L20.5 329 H19.5Z" fill="#bbb"/><circle cx="26.8" cy="328.3" r="1.1" fill="#bbb"/><path d="M30.8 327.8 V326.9 A1.2 1.2 0 0 1 33.2 326.9 V327.8" stroke="#bbb" stroke-width="0.5" fill="none"/><rect x="30.5" y="327.8" width="3" height="2.2" fill="#bbb"/><path d="M44.6 326 L46.8 328.2 L44.6 330.4 L42.4 328.2Z" fill="#bbb"/><circle cx="44.6" cy="328.2" r="0.5" fill="#333"/><path d="M127 329.8 H129.6 L128.3 326.6Z" fill="#aaa"/><circle cx="134" cy="328.3" r="1" fill="#bbb"/><path d="M138.3 326.8 L140.7 329.8" stroke="#bbb" stroke-width="0.5"/><rect x="149" y="326.6" width="3" height="3.4" fill="#bbb"/><circle cx="156.5" cy="328.3" r="1.4" fill="none" stroke="#bbb" stroke-width="0.5"/><circle cx="157" cy="328.3" r="1.1" fill="none" stroke="#bbb" stroke-width="0.5"/><circle cx="162" cy="328.3" r="1.5" fill="#bbb"/><path d="M162 326.8 A1.5 1.5 0 0 1 163.5 328.3 H162Z" fill="#333"/><circle cx="168" cy="328.3" r="1.5" fill="none" stroke="#bbb" stroke-width="0.5"/><path d="M167.2 328.3 H168.8" stroke="#bbb" stroke-width="0.4"/><ellipse cx="15.5" cy="335.1" rx="1.6" ry="1" fill="none" stroke="#ccc" stroke-width="0.5"/><circle cx="15.5" cy="335.1" r="0.55" fill="#ccc"/><path d="M39.70 334.30 L40.90 335.80 L42.10 334.30" stroke="#999" stroke-width="0.6" fill="none"/><path d="M127.5 336.40 H130 L128.8 333.80Z" fill="#bbb"/><path d="M137.8 336.70 L140.8 333.50" stroke="#ccc" stroke-width="0.6"/><path d="M208.80 334.30 L210.00 335.80 L211.20 334.30" stroke="#9a9a9a" stroke-width="0.6" fill="none"/><rect x="264.5" y="333.80" width="3.4" height="2.6" fill="none" stroke="#999" stroke-width="0.5"/><path d="M298.30 334.30 L299.50 335.80 L300.70 334.30" stroke="#9a9a9a" stroke-width="0.6" fill="none"/><path d="M52.20 340.69 L53.40 342.19 L54.60 340.69" stroke="#999" stroke-width="0.6" fill="none"/><circle cx="65.70" cy="348.18" r="1.75" fill="none" stroke="#aaa" stroke-width="0.6"/><path d="M65.00 346.08 H66.40" stroke="#aaa" stroke-width="0.6"/><circle cx="270.8" cy="347.88" r="1.7" fill="none" stroke="#a8a8a8" stroke-width="0.6"/><circle cx="270.8" cy="347.88" r="0.6" fill="#a8a8a8"/><path d="M52.20 353.47 L53.40 354.97 L54.60 353.47" stroke="#999" stroke-width="0.6" fill="none"/><circle cx="65.70" cy="360.96" r="1.75" fill="none" stroke="#aaa" stroke-width="0.6"/><path d="M65.00 358.86 H66.40" stroke="#aaa" stroke-width="0.6"/><circle cx="270.8" cy="360.66" r="1.7" fill="none" stroke="#a8a8a8" stroke-width="0.6"/><circle cx="270.8" cy="360.66" r="0.6" fill="#a8a8a8"/><path d="M52.20 366.25 L53.40 367.75 L54.60 366.25" stroke="#999" stroke-width="0.6" fill="none"/><circle cx="65.70" cy="373.74" r="1.75" fill="none" stroke="#aaa" stroke-width="0.6"/><path d="M65.00 371.64 H66.40" stroke="#aaa" stroke-width="0.6"/><circle cx="270.8" cy="373.44" r="1.7" fill="none" stroke="#a8a8a8" stroke-width="0.6"/><circle cx="270.8" cy="373.44" r="0.6" fill="#a8a8a8"/><path d="M145.40 340.69 L146.60 342.19 L147.80 340.69" stroke="#999" stroke-width="0.6" fill="none"/><path d="M45.80 378.63 L47.10 379.83 L45.80 381.03" stroke="#999" stroke-width="0.6" fill="none"/><ellipse cx="15.5" cy="386.22" rx="1.6" ry="1" fill="none" stroke="#ccc" stroke-width="0.5"/><circle cx="15.5" cy="386.22" r="0.55" fill="#ccc"/><path d="M39.70 385.02 L41.00 386.22 L39.70 387.42" stroke="#999" stroke-width="0.6" fill="none"/><path d="M127.5 387.52 H130 L128.8 384.92Z" fill="#bbb"/><path d="M137.8 387.82 L140.8 384.62" stroke="#ccc" stroke-width="0.6"/><path d="M208.80 385.42 L210.00 386.92 L211.20 385.42" stroke="#9a9a9a" stroke-width="0.6" fill="none"/><path d="M256.70 385.42 L257.90 386.92 L259.10 385.42" stroke="#9a9a9a" stroke-width="0.6" fill="none"/><rect x="264.5" y="384.92" width="3.4" height="2.6" fill="none" stroke="#999" stroke-width="0.5"/><path d="M298.30 385.42 L299.50 386.92 L300.70 385.42" stroke="#9a9a9a" stroke-width="0.6" fill="none"/><path d="M311.8 317.5 H316.2 V320.5 L314 322.5 L311.8 320.5Z" fill="#3b86dd"/><path d="M600 325.5 H603.6 V328.5 L601.8 329.8 L600 328.5Z" fill="#c8c8c8"/><circle cx="602" cy="335" r="1.6" fill="none" stroke="#bbb" stroke-width="0.7"/><circle cx="602" cy="335" r="0.6" fill="#bbb"/><path d="M649.2 305.2 H651.8 M649.2 306.2 H651.8 M649.2 307.2 H651.8" stroke="#777" stroke-width="0.4"/><path d="M678.6 304.6 L679.9 306.1 L678.6 307.6 M680.6 304.6 L681.9 306.1 L680.6 307.6" stroke="#c0c0c0" stroke-width="0.6" fill="none"/><path d="M610.50 315.4 H614.10 M611.10 316.8 H613.50 M610.50 318.2 H614.10" stroke="#8a8a8a" stroke-width="0.6"/><path d="M619.60 315.4 H623.20 M620.20 316.8 H622.60 M619.60 318.2 H623.20" stroke="#3b86dd" stroke-width="0.6"/><path d="M629.30 315.4 H632.90 M629.90 316.8 H632.30 M629.30 318.2 H632.90" stroke="#8a8a8a" stroke-width="0.6"/><path d="M640.90 315.4 H644.50 M641.50 316.8 H643.90 M640.90 318.2 H644.50" stroke="#8a8a8a" stroke-width="0.6"/><path d="M650.00 315.4 H653.60 M650.60 316.8 H653.00 M650.00 318.2 H653.60" stroke="#8a8a8a" stroke-width="0.6"/><path d="M659.70 315.4 H663.30 M660.30 316.8 H662.70 M659.70 318.2 H663.30" stroke="#8a8a8a" stroke-width="0.6"/><path d="M670.70 315.4 H674.30 M671.30 316.8 H673.70 M670.70 318.2 H674.30" stroke="#8a8a8a" stroke-width="0.6"/><path d="M609.90 325.70 H613.50 M611.10 326.90 H613.50 M611.10 328.10 H613.50 M609.90 329.30 H613.50" stroke="#c8c8c8" stroke-width="0.7"/><path d="M637.70 325.70 H641.30 M638.90 326.90 H641.30 M638.90 328.10 H641.30 M637.70 329.30 H641.30" stroke="#c8c8c8" stroke-width="0.7"/><path d="M662.20 325.70 H665.80 M663.40 326.90 H665.80 M663.40 328.10 H665.80 M662.20 329.30 H665.80" stroke="#c8c8c8" stroke-width="0.7"/><path d="M609.90 333.10 H613.50 M611.10 334.30 H613.50 M611.10 335.50 H613.50 M609.90 336.70 H613.50" stroke="#c8c8c8" stroke-width="0.7"/><path d="M637.70 333.10 H641.30 M638.90 334.30 H641.30 M638.90 335.50 H641.30 M637.70 336.70 H641.30" stroke="#c8c8c8" stroke-width="0.7"/><path d="M664.5 333 V336.8 L661.8 334.9Z" fill="#3b86dd"/><path d="M670.5 333 V336.8 L673.2 334.9Z" fill="#999"/><path d="M674 333.5 L676 334.9 L674 336.3" stroke="#999" stroke-width="0.5" fill="none"/></svg>
</body></html>
